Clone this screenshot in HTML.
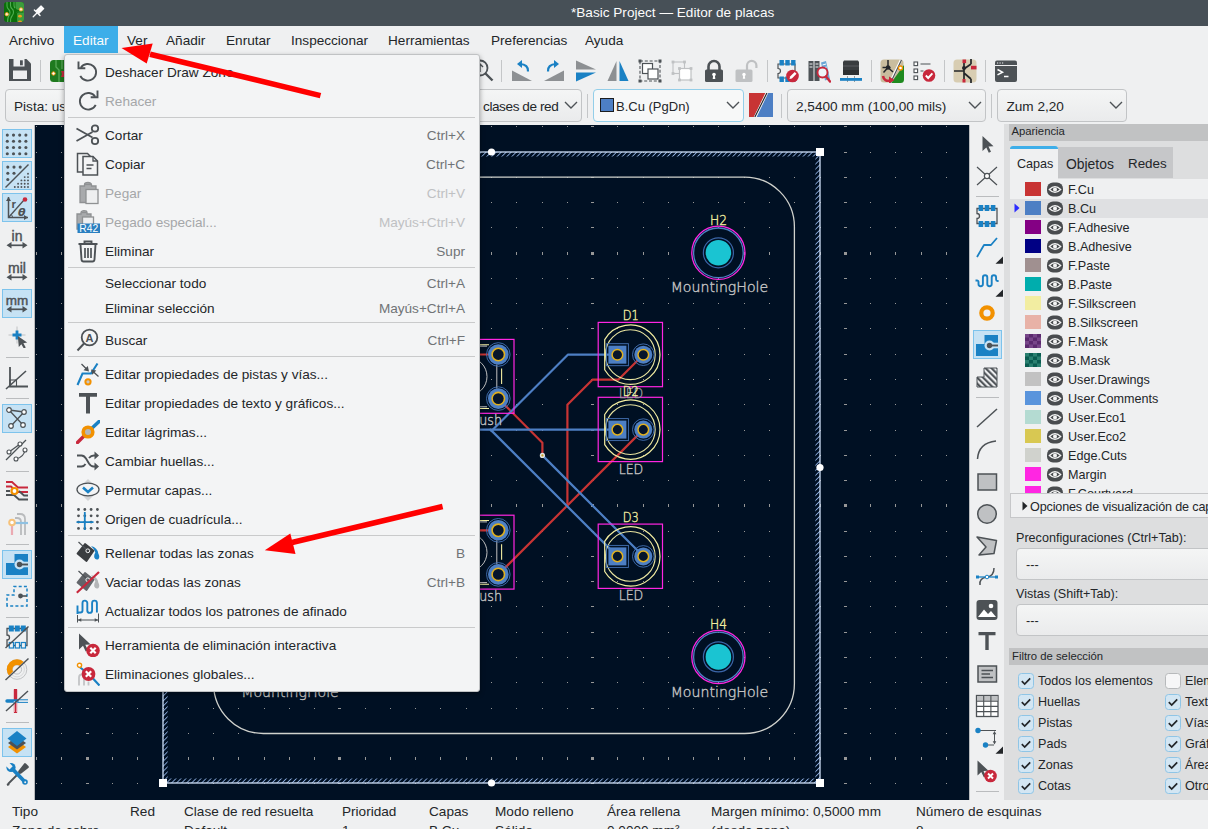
<!DOCTYPE html>
<html lang="es"><head><meta charset="utf-8"><title>Basic Project — Editor de placas</title>
<style>
html,body{margin:0;padding:0}
body{width:1208px;height:829px;overflow:hidden;position:relative;background:#eff0f1;font-family:"Liberation Sans",sans-serif;font-size:13.6px;color:#232629}
.abs{position:absolute}
.t{position:absolute;white-space:nowrap;line-height:16px;margin-top:1px}
#title{left:0;top:0;width:1208px;height:26px;background:#475057}
#title .t{color:#fcfcfc;top:4px;left:571px}
#menubar{left:0;top:26px;width:1208px;height:28px;background:#eff0f1}
#menubar .t{top:6px}
#menubar .hl{position:absolute;left:64px;top:0;width:54px;height:27px;background:#3daee9}
.sep{position:absolute;width:1px;background:#c4c6c8}
.combo{position:absolute;height:32.5px;border:1px solid #c2c4c6;border-radius:4px;background:linear-gradient(#f4f5f5,#eaebec);box-sizing:border-box}
.combo .t{top:8px}
.combo svg{position:absolute;right:3px;top:10px}
#menu{left:64px;top:54px;width:416px;height:638px;background:#f3f4f5;border:1px solid #c0c2c4;border-radius:3px;box-sizing:border-box;box-shadow:0 2px 5px rgba(0,0,0,.35)}
#menu .mi{position:absolute;left:40px;white-space:nowrap;line-height:16px;margin-top:1px}
#menu .sc{position:absolute;right:14px;white-space:nowrap;line-height:16px;color:#707376;margin-top:1px}
#menu .dis{color:#a5a7a9}
#menu .scd{color:#bfc1c3}
#menu .ms{position:absolute;left:3px;right:4px;height:1px;background:#c9cacb}
#menu svg{position:absolute}
</style></head><body>
<div id="title" class="abs"><span class="t">*Basic Project — Editor de placas</span>
<svg class="abs" style="left:4px;top:2px" width="20" height="20" viewBox="0 0 20 20"><rect width="20" height="20" rx="3" fill="#0a6f0a"/><path d="M11.500 0H17a3 3 0 0 1 3 3v14a3 3 0 0 1-3 3h-5v-8.500q0-2 2-2h1v-1.500q-3.500 0-3.500-3z" fill="#3c9c3c"/><path d="M3 0v4q0 2 1.500 3.200t1.500 3.200q0 2-1.200 3.500T3.600 20M6.500 0v3.500q0 2 1.500 3.200t1.500 3.300q0 2.500-1.500 4T6.500 20M10 0v3q0 2 1 3" fill="none" stroke="#4fae4f" stroke-width="1.100"/><path d="M12.500 20v-8q0-2 2-2h5" fill="none" stroke="#0a6f0a" stroke-width="1.200"/><circle cx="17" cy="7.400" r="1.700" fill="#ffe9c4" stroke="#f29c1c" stroke-width=".8"/><circle cx="2.800" cy="12.200" r="1.700" fill="#ffe9c4" stroke="#f29c1c" stroke-width=".8"/><ellipse cx="16" cy="14.200" rx="1.900" ry="1.400" fill="#f29c1c"/><ellipse cx="16" cy="19.600" rx="1.900" ry="1.200" fill="#f29c1c"/></svg>
<svg class="abs" style="left:32px;top:5px" width="14" height="14" viewBox="0 0 14 14"><path d="M1.200 11.800L5.200 7.800" stroke="#fcfcfc" stroke-width="1.300" stroke-linecap="round"/><path d="M2.400 5L8 10.600" stroke="#fcfcfc" stroke-width="1.400" stroke-linecap="round"/><g transform="translate(7.400 5.200) rotate(-45)"><rect x="-3.200" y="-2.500" width="8" height="5" rx=".6" fill="#fcfcfc"/></g></svg>
</div>
<div id="menubar" class="abs"><div class="hl"></div>
<span class="t" style="left:9px">Archivo</span>
<span class="t" style="left:73px;color:#fcfcfc">Editar</span>
<span class="t" style="left:127px">Ver</span>
<span class="t" style="left:166px">Añadir</span>
<span class="t" style="left:226px">Enrutar</span>
<span class="t" style="left:291px">Inspeccionar</span>
<span class="t" style="left:388px">Herramientas</span>
<span class="t" style="left:491px">Preferencias</span>
<span class="t" style="left:585px">Ayuda</span>
</div>
<!-- toolbar row 1 -->
<div id="tb1" class="abs" style="left:0;top:54px;width:1208px;height:34px">
<!--TBI--><svg class="abs" style="left:7.5px;top:3.800px" width="24" height="24" viewBox="0 0 24 24"><path d="M1 1h17.500L23 5.500V23H1z" fill="#4d5256"/><rect x="5.500" y="1" width="11" height="7.500" fill="#eff0f1"/><rect x="12" y="2.300" width="2.800" height="5" fill="#4d5256"/><rect x="5" y="12.500" width="14" height="8.500" fill="#eff0f1"/></svg>
<svg class="abs" style="left:49px;top:4.5px" width="24" height="24" viewBox="0 0 24 24"><rect x="1" y="1" width="22" height="22" rx="3.500" fill="#1f7a1f"/><path d="M7 1v7l3 3v12M13 1v9" stroke="#58a858" stroke-width="1.300" fill="none"/><circle cx="4.500" cy="14.500" r="1.700" fill="#fff" stroke="#f29100" stroke-width="1"/><path d="M9 12h5l-1 3 1 3H9l1-3z" fill="#c8283c" transform="translate(3 0)"/></svg>
<svg class="abs" style="left:470.5px;top:4.5px" width="24" height="24" viewBox="0 0 24 24"><circle cx="9" cy="9" r="7.500" fill="none" stroke="#4d5256" stroke-width="1.800"/><path d="M14.500 14.500l7 7" stroke="#4d5256" stroke-width="2.400"/><path d="M9 5v8M6 8l3-3 3 3" stroke="#4d5256" stroke-width="1.400" fill="none"/></svg>
<svg class="abs" style="left:509.70000000000005px;top:4.5px" width="24" height="24" viewBox="0 0 24 24"><path d="M2 22h20L2 11.500z" fill="#8d9093"/><path d="M18 12.500q.5-7-8-7.500" fill="none" stroke="#1a81c4" stroke-width="2.200"/><path d="M12 1v8L7 5z" fill="#1a81c4"/></svg>
<svg class="abs" style="left:542.3px;top:4.5px" width="24" height="24" viewBox="0 0 24 24"><path d="M22 22H2l20-10.500z" fill="#8d9093"/><path d="M6 12.500q-.5-7 8-7.500" fill="none" stroke="#1a81c4" stroke-width="2.200"/><path d="M12 1v8l5-4z" fill="#1a81c4"/></svg>
<svg class="abs" style="left:573.7px;top:4.5px" width="24" height="24" viewBox="0 0 24 24"><path d="M2 1.500v9h20z" fill="#8d9093"/><path d="M2 22.500v-9h20z" fill="#1a81c4"/></svg>
<svg class="abs" style="left:605.8px;top:4.5px" width="24" height="24" viewBox="0 0 24 24"><path d="M10.500 2v20h-9z" fill="#8d9093"/><path d="M13.500 2v20h9z" fill="#1a81c4"/></svg>
<svg class="abs" style="left:638.1px;top:4.5px" width="24" height="24" viewBox="0 0 24 24"><rect x="2" y="2" width="20" height="20" fill="none" stroke="#4d5256" stroke-width="1.100" stroke-dasharray="3 1.800"/><rect x="4.500" y="4.500" width="10" height="10" fill="#fff" stroke="#4d5256" stroke-width="1.200"/><rect x="10" y="10" width="10" height="10" fill="#fff" stroke="#4d5256" stroke-width="1.200"/><rect x="0.5" y="0.5" width="3" height="3" fill="#4d5256"/><rect x="0.5" y="20.5" width="3" height="3" fill="#4d5256"/><rect x="20.5" y="0.5" width="3" height="3" fill="#4d5256"/><rect x="20.5" y="20.5" width="3" height="3" fill="#4d5256"/></svg>
<svg class="abs" style="left:670.4px;top:4.5px" width="24" height="24" viewBox="0 0 24 24"><rect x="3" y="3" width="11.500" height="11.500" fill="none" stroke="#bfc1c3" stroke-width="1.100"/><rect x="9.500" y="9.500" width="11.500" height="11.500" fill="#fff" stroke="#bfc1c3" stroke-width="1.200"/><rect x="1.6" y="1.6" width="2.800" height="2.800" fill="#bfc1c3"/><rect x="13.1" y="1.6" width="2.800" height="2.800" fill="#bfc1c3"/><rect x="1.6" y="13.1" width="2.800" height="2.800" fill="#bfc1c3"/><rect x="8.1" y="8.1" width="2.800" height="2.800" fill="#bfc1c3"/><rect x="19.6" y="8.1" width="2.800" height="2.800" fill="#bfc1c3"/><rect x="8.1" y="19.6" width="2.800" height="2.800" fill="#bfc1c3"/><rect x="19.6" y="19.6" width="2.800" height="2.800" fill="#bfc1c3"/></svg>
<svg class="abs" style="left:701.9px;top:4.5px" width="24" height="24" viewBox="0 0 24 24"><path d="M6.500 11V7.500a5.500 5.500 0 0 1 11 0V11" fill="none" stroke="#4d5256" stroke-width="2.600"/><rect x="3" y="10.500" width="18" height="12.500" rx="1.500" fill="#4d5256"/><circle cx="12" cy="15.500" r="1.800" fill="#fff"/><path d="M11.200 16h1.600l.5 4h-2.600z" fill="#fff"/></svg>
<svg class="abs" style="left:733.7px;top:4.5px" width="24" height="24" viewBox="0 0 24 24"><path d="M13 11V6.500a4.700 4.700 0 0 1 9.400 0V9" fill="none" stroke="#bfc1c3" stroke-width="2.200"/><rect x="1.500" y="10.500" width="17" height="12.500" rx="1.500" fill="#bfc1c3"/><circle cx="10" cy="15.500" r="1.700" fill="#fff"/><path d="M9.300 16h1.400l.5 3.800H8.800z" fill="#fff"/></svg>
<svg class="abs" style="left:774.8px;top:4.5px" width="24" height="24" viewBox="0 0 24 24"><path d="M3 5h17v14H3v-4.500a2.500 2.500 0 0 0 0-5z" fill="none" stroke="#4d5256" stroke-width="1.200"/><rect x="4.5" y="1" width="4.400" height="5.500" fill="#1a81c4"/><rect x="4.5" y="17.5" width="4.400" height="5.500" fill="#1a81c4"/><rect x="10.3" y="1" width="4.400" height="5.500" fill="#1a81c4"/><rect x="10.3" y="17.5" width="4.400" height="5.500" fill="#1a81c4"/><rect x="16.1" y="1" width="4.400" height="5.500" fill="#1a81c4"/><rect x="16.1" y="17.5" width="4.400" height="5.500" fill="#1a81c4"/><circle cx="17.500" cy="17" r="6.300" fill="#c8283c"/><path d="M14.500 20l.6-2.400 4.600-4.600 1.800 1.800-4.600 4.600z" fill="#fff"/></svg>
<svg class="abs" style="left:807.1px;top:4.5px" width="24" height="24" viewBox="0 0 24 24"><rect x="1.500" y="2" width="5" height="20" fill="#4d5256"/><rect x="7.500" y="2" width="5" height="20" fill="#4d5256"/><path d="M2.500 5h3M2.500 8h3M8.500 5h3M8.500 8h3" stroke="#eff0f1" stroke-width="1"/><path d="M14 3.500l5-1.500 4 18-5 1.500z" fill="#6aa6d6"/><path d="M15.500 6l3.500-1M16.200 9l3.500-1" stroke="#fff" stroke-width="1"/><circle cx="15.500" cy="13.500" r="5" fill="#eef4fa" stroke="#c8283c" stroke-width="1.900"/><path d="M19 17.500l4 5" stroke="#c8283c" stroke-width="2.400" stroke-linecap="round"/></svg>
<svg class="abs" style="left:839.1px;top:4.5px" width="24" height="24" viewBox="0 0 24 24"><path d="M5 1.500h14l1 1.500v12.500H4V3z" fill="#3a3d40"/><path d="M4 7h16M4 15.500h16" stroke="#5a5d60" stroke-width="1"/><rect x="4" y="11" width="16" height="5" fill="#2c2f31"/><path d="M8.500 17v6M15.500 17v6" stroke="#9a9c9e" stroke-width="1"/><rect x="1" y="19" width="22" height="2.800" fill="#1a81c4"/></svg>
<svg class="abs" style="left:880.1px;top:4.5px" width="24" height="24" viewBox="0 0 24 24"><rect x="0.500" y="0.500" width="23" height="23" rx="3.500" fill="#c9bd9e"/><path d="M11 24L24 6V20.500a3.500 3.500 0 0 1-3.500 3.500z" fill="#1f8a1f"/><path d="M10 24L21 1" stroke="#fff" stroke-width="2.600"/><path d="M10.500 24L21.500 1" stroke="#4d5256" stroke-width="1.200"/><path d="M8 1v7M2.500 8.500h8M8 8.500l5 4.500M8 8.500l-4.500 5" stroke="#232629" stroke-width="1.500" fill="none"/><circle cx="8" cy="8.500" r="2.200" fill="#232629"/><circle cx="20.500" cy="9" r="2" fill="#fff" stroke="#f29100" stroke-width="1.300"/><path d="M3 17q1 6 8 4.500" fill="none" stroke="#c8283c" stroke-width="2.600"/><path d="M9 17.500l5.500 3.500-5.500 3.500z" fill="#c8283c"/></svg>
<svg class="abs" style="left:911.9px;top:4.5px" width="24" height="24" viewBox="0 0 24 24"><rect x="2" y="3" width="3.600" height="3.600" fill="#fff" stroke="#4d5256" stroke-width="1.100"/><rect x="2" y="10" width="3.600" height="3.600" fill="#fff" stroke="#4d5256" stroke-width="1.100"/><rect x="2" y="17" width="3.600" height="3.600" fill="#fff" stroke="#4d5256" stroke-width="1.100"/><path d="M8.500 5h10M8.500 12h3" stroke="#4d5256" stroke-width="1.200"/><circle cx="17" cy="16.500" r="6.300" fill="#c8283c"/><path d="M13.800 16.500l2.400 2.500 4.200-4.600" fill="none" stroke="#fff" stroke-width="1.900"/></svg>
<svg class="abs" style="left:952.9px;top:4.5px" width="24" height="24" viewBox="0 0 24 24"><rect x="0.500" y="0.500" width="23" height="23" rx="3.500" fill="#d8cdb2"/><path d="M11 3v18M1 12h10M11 10l7-5M11 14l7 6M18 5V0M18 20v4M18 8.500h4" stroke="#232629" stroke-width="1.700" fill="none"/><circle cx="11" cy="9" r="2" fill="#232629"/><rect x="9.500" y="0.500" width="3.600" height="3.600" fill="#c8283c"/><rect x="18" y="6.800" width="5.500" height="3.600" fill="#c8283c"/><rect x="9.500" y="20" width="3" height="3.500" fill="#c8283c"/></svg>
<svg class="abs" style="left:993.8px;top:4.5px" width="24" height="24" viewBox="0 0 24 24"><rect x="1" y="1.500" width="22" height="21.500" rx="2" fill="#4d5256"/><path d="M1 6.500h22" stroke="#eff0f1" stroke-width="1"/><path d="M3 4h1.200M5.500 4h1.200M8 4h1.200" stroke="#eff0f1" stroke-width="1.200"/><path d="M3.500 10.500l5 2.700-5 2.700" fill="none" stroke="#fff" stroke-width="1.500"/><path d="M10 17.500h4.500" stroke="#fff" stroke-width="1.500"/></svg>
<!--/TBI-->
<div class="sep" style="left:40px;top:6px;height:22px"></div>
<div class="sep" style="left:501px;top:6px;height:22px"></div>
<div class="sep" style="left:767px;top:6px;height:22px"></div>
<div class="sep" style="left:871px;top:6px;height:22px"></div>
<div class="sep" style="left:944px;top:6px;height:22px"></div>
<div class="sep" style="left:985px;top:6px;height:22px"></div>
</div>
<!-- toolbar row 2 -->
<div id="tb2" class="abs" style="left:0;top:88px;width:1208px;height:37px">
<div class="combo" style="left:5px;top:1px;width:200px"><span class="t" style="left:8px">Pista: usar tamaño de clases de red</span></div>
<div class="combo" style="left:380px;top:1px;width:202px"><span class="t" style="left:102px;letter-spacing:-0.42px">clases de red</span><svg width="14" height="10" viewBox="0 0 14 10"><path d="M1 2l6 6 6-6" fill="none" stroke="#4d5256" stroke-width="1.400"/></svg></div>
<div class="sep" style="left:587px;top:6px;height:24px"></div>
<div class="combo" style="left:593px;top:1px;width:151px;border-color:#93cee9;background:#f7f8f8"><div class="abs" style="left:6px;top:8px;width:12px;height:12px;background:#4d7fc4;border:1px solid #1b1e20"></div><span class="t" style="left:22px;font-size:13px">B.Cu (PgDn)</span><svg width="14" height="10" viewBox="0 0 14 10"><path d="M1 2l6 6 6-6" fill="none" stroke="#4d5256" stroke-width="1.400"/></svg></div>
<svg class="abs" style="left:749px;top:5px" width="24" height="24" viewBox="0 0 25 23" preserveAspectRatio="none"><rect width="25" height="23" fill="#c83434"/><path d="M18 0h7v23H5z" fill="#4d7fc4"/><path d="M17 0h3L8 23H5z" fill="#fff"/><path d="M18 0h1.300L6.800 23H5.500z" fill="#222"/></svg>
<div class="sep" style="left:781px;top:6px;height:24px"></div>
<div class="combo" style="left:787px;top:1px;width:199px"><span class="t" style="left:8px">2,5400 mm (100,00 mils)</span><svg width="14" height="10" viewBox="0 0 14 10"><path d="M1 2l6 6 6-6" fill="none" stroke="#4d5256" stroke-width="1.400"/></svg></div>
<div class="sep" style="left:991px;top:6px;height:24px"></div>
<div class="combo" style="left:997px;top:1px;width:130px"><span class="t" style="left:8.500px">Zum 2,20</span><svg width="14" height="10" viewBox="0 0 14 10"><path d="M1 2l6 6 6-6" fill="none" stroke="#4d5256" stroke-width="1.400"/></svg></div>
</div>
<svg class="abs" id="canvas" style="left:35px;top:125px" width="934" height="675" viewBox="35 125 934 675">
<rect x="35" y="125" width="934" height="675" fill="#001023"/>
<defs><pattern id="gd" x="717.4" y="251.8" width="25.25" height="25.25" patternUnits="userSpaceOnUse"><rect x="0.3" y="0.3" width="1.4" height="1.4" fill="#596170"/></pattern><pattern id="gd10" x="844.1" y="251.3" width="252.5" height="252.5" patternUnits="userSpaceOnUse"><rect x="0.3" y="0.3" width="2.4" height="2.4" fill="#8a8f98"/></pattern><pattern id="hz" width="3.55" height="3.55" patternUnits="userSpaceOnUse" patternTransform="rotate(-45)"><rect width="3.55" height="0.85" fill="#8fb0e2"/></pattern></defs>
<path shape-rendering="crispEdges" stroke="#979797" stroke-width="1" fill="none" d="M36 126.5h1M36 152.5h1M36 177.5h1M36 202.5h1M36 227.5h1M36.5 252v3M36 278.5h1M36 303.5h1M36 328.5h1M36 354.5h1M36 379.5h1M36 404.5h1M36 430.5h1M36 455.5h1M36 480.5h1M36.5 504v3M36 531.5h1M36 556.5h1M36 581.5h1M36 606.5h1M36 632.5h1M36 657.5h1M36 682.5h1M36 708.5h1M36 733.5h1M36.5 757v3M36 783.5h1M61 126.5h1M61 152.5h1M61 177.5h1M61 202.5h1M61 227.5h1M61.5 252v3M61 278.5h1M61 303.5h1M61 328.5h1M61 354.5h1M61 379.5h1M61 404.5h1M61 430.5h1M61 455.5h1M61 480.5h1M61.5 504v3M61 531.5h1M61 556.5h1M61 581.5h1M61 606.5h1M61 632.5h1M61 657.5h1M61 682.5h1M61 708.5h1M61 733.5h1M61.5 757v3M61 783.5h1M86 126.5h3M86 152.5h3M86 177.5h3M86 202.5h3M86 227.5h3M86 278.5h3M86 303.5h3M86 328.5h3M86 354.5h3M86 379.5h3M86 404.5h3M86 430.5h3M86 455.5h3M86 480.5h3M86 531.5h3M86 556.5h3M86 581.5h3M86 606.5h3M86 632.5h3M86 657.5h3M86 682.5h3M86 708.5h3M86 733.5h3M86 783.5h3M112 126.5h1M112 152.5h1M112 177.5h1M112 202.5h1M112 227.5h1M112.5 252v3M112 278.5h1M112 303.5h1M112 328.5h1M112 354.5h1M112 379.5h1M112 404.5h1M112 430.5h1M112 455.5h1M112 480.5h1M112.5 504v3M112 531.5h1M112 556.5h1M112 581.5h1M112 606.5h1M112 632.5h1M112 657.5h1M112 682.5h1M112 708.5h1M112 733.5h1M112.5 757v3M112 783.5h1M137 126.5h1M137 152.5h1M137 177.5h1M137 202.5h1M137 227.5h1M137.5 252v3M137 278.5h1M137 303.5h1M137 328.5h1M137 354.5h1M137 379.5h1M137 404.5h1M137 430.5h1M137 455.5h1M137 480.5h1M137.5 504v3M137 531.5h1M137 556.5h1M137 581.5h1M137 606.5h1M137 632.5h1M137 657.5h1M137 682.5h1M137 708.5h1M137 733.5h1M137.5 757v3M137 783.5h1M163 126.5h1M163 152.5h1M163 177.5h1M163 202.5h1M163 227.5h1M163.5 252v3M163 278.5h1M163 303.5h1M163 328.5h1M163 354.5h1M163 379.5h1M163 404.5h1M163 430.5h1M163 455.5h1M163 480.5h1M163.5 504v3M163 531.5h1M163 556.5h1M163 581.5h1M163 606.5h1M163 632.5h1M163 657.5h1M163 682.5h1M163 708.5h1M163 733.5h1M163.5 757v3M163 783.5h1M188 126.5h1M188 152.5h1M188 177.5h1M188 202.5h1M188 227.5h1M188.5 252v3M188 278.5h1M188 303.5h1M188 328.5h1M188 354.5h1M188 379.5h1M188 404.5h1M188 430.5h1M188 455.5h1M188 480.5h1M188.5 504v3M188 531.5h1M188 556.5h1M188 581.5h1M188 606.5h1M188 632.5h1M188 657.5h1M188 682.5h1M188 708.5h1M188 733.5h1M188.5 757v3M188 783.5h1M213 126.5h1M213 152.5h1M213 177.5h1M213 202.5h1M213 227.5h1M213.5 252v3M213 278.5h1M213 303.5h1M213 328.5h1M213 354.5h1M213 379.5h1M213 404.5h1M213 430.5h1M213 455.5h1M213 480.5h1M213.5 504v3M213 531.5h1M213 556.5h1M213 581.5h1M213 606.5h1M213 632.5h1M213 657.5h1M213 682.5h1M213 708.5h1M213 733.5h1M213.5 757v3M213 783.5h1M238 126.5h1M238 152.5h1M238 177.5h1M238 202.5h1M238 227.5h1M238.5 252v3M238 278.5h1M238 303.5h1M238 328.5h1M238 354.5h1M238 379.5h1M238 404.5h1M238 430.5h1M238 455.5h1M238 480.5h1M238.5 504v3M238 531.5h1M238 556.5h1M238 581.5h1M238 606.5h1M238 632.5h1M238 657.5h1M238 682.5h1M238 708.5h1M238 733.5h1M238.5 757v3M238 783.5h1M264 126.5h1M264 152.5h1M264 177.5h1M264 202.5h1M264 227.5h1M264.5 252v3M264 278.5h1M264 303.5h1M264 328.5h1M264 354.5h1M264 379.5h1M264 404.5h1M264 430.5h1M264 455.5h1M264 480.5h1M264.5 504v3M264 531.5h1M264 556.5h1M264 581.5h1M264 606.5h1M264 632.5h1M264 657.5h1M264 682.5h1M264 708.5h1M264 733.5h1M264.5 757v3M264 783.5h1M289 126.5h1M289 152.5h1M289 177.5h1M289 202.5h1M289 227.5h1M289.5 252v3M289 278.5h1M289 303.5h1M289 328.5h1M289 354.5h1M289 379.5h1M289 404.5h1M289 430.5h1M289 455.5h1M289 480.5h1M289.5 504v3M289 531.5h1M289 556.5h1M289 581.5h1M289 606.5h1M289 632.5h1M289 657.5h1M289 682.5h1M289 708.5h1M289 733.5h1M289.5 757v3M289 783.5h1M314 126.5h1M314 152.5h1M314 177.5h1M314 202.5h1M314 227.5h1M314.5 252v3M314 278.5h1M314 303.5h1M314 328.5h1M314 354.5h1M314 379.5h1M314 404.5h1M314 430.5h1M314 455.5h1M314 480.5h1M314.5 504v3M314 531.5h1M314 556.5h1M314 581.5h1M314 606.5h1M314 632.5h1M314 657.5h1M314 682.5h1M314 708.5h1M314 733.5h1M314.5 757v3M314 783.5h1M338 126.5h3M338 152.5h3M338 177.5h3M338 202.5h3M338 227.5h3M338 278.5h3M338 303.5h3M338 328.5h3M338 354.5h3M338 379.5h3M338 404.5h3M338 430.5h3M338 455.5h3M338 480.5h3M338 531.5h3M338 556.5h3M338 581.5h3M338 606.5h3M338 632.5h3M338 657.5h3M338 682.5h3M338 708.5h3M338 733.5h3M338 783.5h3M365 126.5h1M365 152.5h1M365 177.5h1M365 202.5h1M365 227.5h1M365.5 252v3M365 278.5h1M365 303.5h1M365 328.5h1M365 354.5h1M365 379.5h1M365 404.5h1M365 430.5h1M365 455.5h1M365 480.5h1M365.5 504v3M365 531.5h1M365 556.5h1M365 581.5h1M365 606.5h1M365 632.5h1M365 657.5h1M365 682.5h1M365 708.5h1M365 733.5h1M365.5 757v3M365 783.5h1M390 126.5h1M390 152.5h1M390 177.5h1M390 202.5h1M390 227.5h1M390.5 252v3M390 278.5h1M390 303.5h1M390 328.5h1M390 354.5h1M390 379.5h1M390 404.5h1M390 430.5h1M390 455.5h1M390 480.5h1M390.5 504v3M390 531.5h1M390 556.5h1M390 581.5h1M390 606.5h1M390 632.5h1M390 657.5h1M390 682.5h1M390 708.5h1M390 733.5h1M390.5 757v3M390 783.5h1M415 126.5h1M415 152.5h1M415 177.5h1M415 202.5h1M415 227.5h1M415.5 252v3M415 278.5h1M415 303.5h1M415 328.5h1M415 354.5h1M415 379.5h1M415 404.5h1M415 430.5h1M415 455.5h1M415 480.5h1M415.5 504v3M415 531.5h1M415 556.5h1M415 581.5h1M415 606.5h1M415 632.5h1M415 657.5h1M415 682.5h1M415 708.5h1M415 733.5h1M415.5 757v3M415 783.5h1M440 126.5h1M440 152.5h1M440 177.5h1M440 202.5h1M440 227.5h1M440.5 252v3M440 278.5h1M440 303.5h1M440 328.5h1M440 354.5h1M440 379.5h1M440 404.5h1M440 430.5h1M440 455.5h1M440 480.5h1M440.5 504v3M440 531.5h1M440 556.5h1M440 581.5h1M440 606.5h1M440 632.5h1M440 657.5h1M440 682.5h1M440 708.5h1M440 733.5h1M440.5 757v3M440 783.5h1M466 126.5h1M466 152.5h1M466 177.5h1M466 202.5h1M466 227.5h1M466.5 252v3M466 278.5h1M466 303.5h1M466 328.5h1M466 354.5h1M466 379.5h1M466 404.5h1M466 430.5h1M466 455.5h1M466 480.5h1M466.5 504v3M466 531.5h1M466 556.5h1M466 581.5h1M466 606.5h1M466 632.5h1M466 657.5h1M466 682.5h1M466 708.5h1M466 733.5h1M466.5 757v3M466 783.5h1M491 126.5h1M491 152.5h1M491 177.5h1M491 202.5h1M491 227.5h1M491.5 252v3M491 278.5h1M491 303.5h1M491 328.5h1M491 354.5h1M491 379.5h1M491 404.5h1M491 430.5h1M491 455.5h1M491 480.5h1M491.5 504v3M491 531.5h1M491 556.5h1M491 581.5h1M491 606.5h1M491 632.5h1M491 657.5h1M491 682.5h1M491 708.5h1M491 733.5h1M491.5 757v3M491 783.5h1M516 126.5h1M516 152.5h1M516 177.5h1M516 202.5h1M516 227.5h1M516.5 252v3M516 278.5h1M516 303.5h1M516 328.5h1M516 354.5h1M516 379.5h1M516 404.5h1M516 430.5h1M516 455.5h1M516 480.5h1M516.5 504v3M516 531.5h1M516 556.5h1M516 581.5h1M516 606.5h1M516 632.5h1M516 657.5h1M516 682.5h1M516 708.5h1M516 733.5h1M516.5 757v3M516 783.5h1M542 126.5h1M542 152.5h1M542 177.5h1M542 202.5h1M542 227.5h1M542.5 252v3M542 278.5h1M542 303.5h1M542 328.5h1M542 354.5h1M542 379.5h1M542 404.5h1M542 430.5h1M542 455.5h1M542 480.5h1M542.5 504v3M542 531.5h1M542 556.5h1M542 581.5h1M542 606.5h1M542 632.5h1M542 657.5h1M542 682.5h1M542 708.5h1M542 733.5h1M542.5 757v3M542 783.5h1M567 126.5h1M567 152.5h1M567 177.5h1M567 202.5h1M567 227.5h1M567.5 252v3M567 278.5h1M567 303.5h1M567 328.5h1M567 354.5h1M567 379.5h1M567 404.5h1M567 430.5h1M567 455.5h1M567 480.5h1M567.5 504v3M567 531.5h1M567 556.5h1M567 581.5h1M567 606.5h1M567 632.5h1M567 657.5h1M567 682.5h1M567 708.5h1M567 733.5h1M567.5 757v3M567 783.5h1M591 126.5h3M591 152.5h3M591 177.5h3M591 202.5h3M591 227.5h3M591 278.5h3M591 303.5h3M591 328.5h3M591 354.5h3M591 379.5h3M591 404.5h3M591 430.5h3M591 455.5h3M591 480.5h3M591 531.5h3M591 556.5h3M591 581.5h3M591 606.5h3M591 632.5h3M591 657.5h3M591 682.5h3M591 708.5h3M591 733.5h3M591 783.5h3M617 126.5h1M617 152.5h1M617 177.5h1M617 202.5h1M617 227.5h1M617.5 252v3M617 278.5h1M617 303.5h1M617 328.5h1M617 354.5h1M617 379.5h1M617 404.5h1M617 430.5h1M617 455.5h1M617 480.5h1M617.5 504v3M617 531.5h1M617 556.5h1M617 581.5h1M617 606.5h1M617 632.5h1M617 657.5h1M617 682.5h1M617 708.5h1M617 733.5h1M617.5 757v3M617 783.5h1M643 126.5h1M643 152.5h1M643 177.5h1M643 202.5h1M643 227.5h1M643.5 252v3M643 278.5h1M643 303.5h1M643 328.5h1M643 354.5h1M643 379.5h1M643 404.5h1M643 430.5h1M643 455.5h1M643 480.5h1M643.5 504v3M643 531.5h1M643 556.5h1M643 581.5h1M643 606.5h1M643 632.5h1M643 657.5h1M643 682.5h1M643 708.5h1M643 733.5h1M643.5 757v3M643 783.5h1M668 126.5h1M668 152.5h1M668 177.5h1M668 202.5h1M668 227.5h1M668.5 252v3M668 278.5h1M668 303.5h1M668 328.5h1M668 354.5h1M668 379.5h1M668 404.5h1M668 430.5h1M668 455.5h1M668 480.5h1M668.5 504v3M668 531.5h1M668 556.5h1M668 581.5h1M668 606.5h1M668 632.5h1M668 657.5h1M668 682.5h1M668 708.5h1M668 733.5h1M668.5 757v3M668 783.5h1M693 126.5h1M693 152.5h1M693 177.5h1M693 202.5h1M693 227.5h1M693.5 252v3M693 278.5h1M693 303.5h1M693 328.5h1M693 354.5h1M693 379.5h1M693 404.5h1M693 430.5h1M693 455.5h1M693 480.5h1M693.5 504v3M693 531.5h1M693 556.5h1M693 581.5h1M693 606.5h1M693 632.5h1M693 657.5h1M693 682.5h1M693 708.5h1M693 733.5h1M693.5 757v3M693 783.5h1M718 126.5h1M718 152.5h1M718 177.5h1M718 202.5h1M718 227.5h1M718.5 252v3M718 278.5h1M718 303.5h1M718 328.5h1M718 354.5h1M718 379.5h1M718 404.5h1M718 430.5h1M718 455.5h1M718 480.5h1M718.5 504v3M718 531.5h1M718 556.5h1M718 581.5h1M718 606.5h1M718 632.5h1M718 657.5h1M718 682.5h1M718 708.5h1M718 733.5h1M718.5 757v3M718 783.5h1M744 126.5h1M744 152.5h1M744 177.5h1M744 202.5h1M744 227.5h1M744.5 252v3M744 278.5h1M744 303.5h1M744 328.5h1M744 354.5h1M744 379.5h1M744 404.5h1M744 430.5h1M744 455.5h1M744 480.5h1M744.5 504v3M744 531.5h1M744 556.5h1M744 581.5h1M744 606.5h1M744 632.5h1M744 657.5h1M744 682.5h1M744 708.5h1M744 733.5h1M744.5 757v3M744 783.5h1M769 126.5h1M769 152.5h1M769 177.5h1M769 202.5h1M769 227.5h1M769.5 252v3M769 278.5h1M769 303.5h1M769 328.5h1M769 354.5h1M769 379.5h1M769 404.5h1M769 430.5h1M769 455.5h1M769 480.5h1M769.5 504v3M769 531.5h1M769 556.5h1M769 581.5h1M769 606.5h1M769 632.5h1M769 657.5h1M769 682.5h1M769 708.5h1M769 733.5h1M769.5 757v3M769 783.5h1M794 126.5h1M794 152.5h1M794 177.5h1M794 202.5h1M794 227.5h1M794.5 252v3M794 278.5h1M794 303.5h1M794 328.5h1M794 354.5h1M794 379.5h1M794 404.5h1M794 430.5h1M794 455.5h1M794 480.5h1M794.5 504v3M794 531.5h1M794 556.5h1M794 581.5h1M794 606.5h1M794 632.5h1M794 657.5h1M794 682.5h1M794 708.5h1M794 733.5h1M794.5 757v3M794 783.5h1M820 126.5h1M820 152.5h1M820 177.5h1M820 202.5h1M820 227.5h1M820.5 252v3M820 278.5h1M820 303.5h1M820 328.5h1M820 354.5h1M820 379.5h1M820 404.5h1M820 430.5h1M820 455.5h1M820 480.5h1M820.5 504v3M820 531.5h1M820 556.5h1M820 581.5h1M820 606.5h1M820 632.5h1M820 657.5h1M820 682.5h1M820 708.5h1M820 733.5h1M820.5 757v3M820 783.5h1M844 126.5h3M844 152.5h3M844 177.5h3M844 202.5h3M844 227.5h3M844 278.5h3M844 303.5h3M844 328.5h3M844 354.5h3M844 379.5h3M844 404.5h3M844 430.5h3M844 455.5h3M844 480.5h3M844 531.5h3M844 556.5h3M844 581.5h3M844 606.5h3M844 632.5h3M844 657.5h3M844 682.5h3M844 708.5h3M844 733.5h3M844 783.5h3M870 126.5h1M870 152.5h1M870 177.5h1M870 202.5h1M870 227.5h1M870.5 252v3M870 278.5h1M870 303.5h1M870 328.5h1M870 354.5h1M870 379.5h1M870 404.5h1M870 430.5h1M870 455.5h1M870 480.5h1M870.5 504v3M870 531.5h1M870 556.5h1M870 581.5h1M870 606.5h1M870 632.5h1M870 657.5h1M870 682.5h1M870 708.5h1M870 733.5h1M870.5 757v3M870 783.5h1M895 126.5h1M895 152.5h1M895 177.5h1M895 202.5h1M895 227.5h1M895.5 252v3M895 278.5h1M895 303.5h1M895 328.5h1M895 354.5h1M895 379.5h1M895 404.5h1M895 430.5h1M895 455.5h1M895 480.5h1M895.5 504v3M895 531.5h1M895 556.5h1M895 581.5h1M895 606.5h1M895 632.5h1M895 657.5h1M895 682.5h1M895 708.5h1M895 733.5h1M895.5 757v3M895 783.5h1M921 126.5h1M921 152.5h1M921 177.5h1M921 202.5h1M921 227.5h1M921.5 252v3M921 278.5h1M921 303.5h1M921 328.5h1M921 354.5h1M921 379.5h1M921 404.5h1M921 430.5h1M921 455.5h1M921 480.5h1M921.5 504v3M921 531.5h1M921 556.5h1M921 581.5h1M921 606.5h1M921 632.5h1M921 657.5h1M921 682.5h1M921 708.5h1M921 733.5h1M921.5 757v3M921 783.5h1M946 126.5h1M946 152.5h1M946 177.5h1M946 202.5h1M946 227.5h1M946.5 252v3M946 278.5h1M946 303.5h1M946 328.5h1M946 354.5h1M946 379.5h1M946 404.5h1M946 430.5h1M946 455.5h1M946 480.5h1M946.5 504v3M946 531.5h1M946 556.5h1M946 581.5h1M946 606.5h1M946 632.5h1M946 657.5h1M946 682.5h1M946 708.5h1M946 733.5h1M946.5 757v3M946 783.5h1M86 253.5h3M86 252.5h3M86 254.5h3M86 505.5h3M86 504.5h3M86 506.5h3M86 758.5h3M86 757.5h3M86 759.5h3M338 253.5h3M338 252.5h3M338 254.5h3M338 505.5h3M338 504.5h3M338 506.5h3M338 758.5h3M338 757.5h3M338 759.5h3M591 253.5h3M591 252.5h3M591 254.5h3M591 505.5h3M591 504.5h3M591 506.5h3M591 758.5h3M591 757.5h3M591 759.5h3M844 253.5h3M844 252.5h3M844 254.5h3M844 505.5h3M844 504.5h3M844 506.5h3M844 758.5h3M844 757.5h3M844 759.5h3"/>
<path d="M163 152H820V783H163Z M167.6 156.6V778.4H815.4V156.6Z" fill="url(#hz)" fill-rule="evenodd"/>
<rect x="163" y="152" width="657" height="631" fill="none" stroke="#cfe0f7" stroke-width="1.3"/>
<rect x="213.6" y="177.1" width="580.8" height="556.4" rx="49.7" fill="none" stroke="#d0d2cd" stroke-width="1.3"/>
<style>.kt{font-family:"DejaVu Sans","DejaVu Sans Light",sans-serif;font-weight:200;stroke-width:0.4px;paint-order:stroke}</style>
<circle cx="718.4" cy="252.8" r="26.6" fill="none" stroke="#ff26e2" stroke-width="1.3"/><circle cx="718.4" cy="252.8" r="24.8" fill="none" stroke="#4d7fc4" stroke-width="1.3"/><circle cx="718.4" cy="252.8" r="15" fill="none" stroke="#3b66a8" stroke-width="1.2"/><circle cx="718.4" cy="252.8" r="12.8" fill="#1ac4d2"/><text x="710.1" y="224.5" class="kt" fill="#f2eda1" stroke="#f2eda1" font-size="14.5" textLength="17" lengthAdjust="spacingAndGlyphs">H2</text><text x="670.6999999999999" y="292.40000000000003" class="kt" fill="#c2c2c2" stroke="#c2c2c2" font-size="14.5" textLength="97.5" lengthAdjust="spacingAndGlyphs">MountingHole</text>
<circle cx="718.4" cy="656.9" r="26.6" fill="none" stroke="#ff26e2" stroke-width="1.3"/><circle cx="718.4" cy="656.9" r="24.8" fill="none" stroke="#4d7fc4" stroke-width="1.3"/><circle cx="718.4" cy="656.9" r="15" fill="none" stroke="#3b66a8" stroke-width="1.2"/><circle cx="718.4" cy="656.9" r="12.8" fill="#1ac4d2"/><text x="710.1" y="628.6" class="kt" fill="#f2eda1" stroke="#f2eda1" font-size="14.5" textLength="17" lengthAdjust="spacingAndGlyphs">H4</text><text x="670.6999999999999" y="696.5" class="kt" fill="#c2c2c2" stroke="#c2c2c2" font-size="14.5" textLength="97.5" lengthAdjust="spacingAndGlyphs">MountingHole</text>
<circle cx="289" cy="252.8" r="26.6" fill="none" stroke="#ff26e2" stroke-width="1.3"/><circle cx="289" cy="252.8" r="24.8" fill="none" stroke="#4d7fc4" stroke-width="1.3"/><circle cx="289" cy="252.8" r="15" fill="none" stroke="#3b66a8" stroke-width="1.2"/><circle cx="289" cy="252.8" r="12.8" fill="#1ac4d2"/><text x="280.7" y="224.5" class="kt" fill="#f2eda1" stroke="#f2eda1" font-size="14.5" textLength="17" lengthAdjust="spacingAndGlyphs">H1</text><text x="241.3" y="292.40000000000003" class="kt" fill="#c2c2c2" stroke="#c2c2c2" font-size="14.5" textLength="97.5" lengthAdjust="spacingAndGlyphs">MountingHole</text>
<circle cx="289" cy="656.9" r="26.6" fill="none" stroke="#ff26e2" stroke-width="1.3"/><circle cx="289" cy="656.9" r="24.8" fill="none" stroke="#4d7fc4" stroke-width="1.3"/><circle cx="289" cy="656.9" r="15" fill="none" stroke="#3b66a8" stroke-width="1.2"/><circle cx="289" cy="656.9" r="12.8" fill="#1ac4d2"/><text x="280.7" y="628.6" class="kt" fill="#f2eda1" stroke="#f2eda1" font-size="14.5" textLength="17" lengthAdjust="spacingAndGlyphs">H3</text><text x="241.3" y="696.5" class="kt" fill="#c2c2c2" stroke="#c2c2c2" font-size="14.5" textLength="97.5" lengthAdjust="spacingAndGlyphs">MountingHole</text>
<polyline points="498.3,398.6 542.4,442.7 542.4,455.4" fill="none" stroke="#c83434" stroke-width="2.2" stroke-linejoin="round" stroke-linecap="round"/>
<polyline points="643.3,354.7 618.3,379.7 592.4,379.7 567.4,404.7 567.4,505" fill="none" stroke="#c83434" stroke-width="2.2" stroke-linejoin="round" stroke-linecap="round"/>
<polyline points="643.3,429.6 498.3,574.6" fill="none" stroke="#c83434" stroke-width="2.2" stroke-linejoin="round" stroke-linecap="round"/>
<polyline points="470,354.5 488,354.5" fill="none" stroke="#c83434" stroke-width="2.2" stroke-linejoin="round" stroke-linecap="round"/>
<polyline points="470,530.3 488,530.3" fill="none" stroke="#c83434" stroke-width="2.2" stroke-linejoin="round" stroke-linecap="round"/>
<polyline points="617.4,354.7 567.8,354.7 491.5,431" fill="none" stroke="#4d7fc4" stroke-width="2.2" stroke-linejoin="round" stroke-linecap="round"/>
<polyline points="617.4,429.6 440,429.6" fill="none" stroke="#4d7fc4" stroke-width="2.2" stroke-linejoin="round" stroke-linecap="round"/>
<polyline points="490.5,429.6 617.4,556.4" fill="none" stroke="#4d7fc4" stroke-width="2.2" stroke-linejoin="round" stroke-linecap="round"/>
<polyline points="542.4,455.4 643.3,556.3" fill="none" stroke="#4d7fc4" stroke-width="2.2" stroke-linejoin="round" stroke-linecap="round"/>
<circle cx="542.4" cy="455.4" r="2.6" fill="#e0e0e0"/><circle cx="542.4" cy="455.4" r="1.1" fill="#c8a020"/>
<rect x="598.1999999999999" y="322.4" width="64.3" height="64.3" fill="none" stroke="#ff26e2" stroke-width="1.2"/>
<path d="M604.6999999999999 339.6424437573689A29.7 29.7 0 1 1 604.6999999999999 369.7575562426311Z" fill="none" stroke="#f2eda1" stroke-width="1.2"/>
<circle cx="630.3" cy="354.7" r="24.9" fill="none" stroke="#e8e4a0" stroke-width="1.1"/>
<rect x="608.4" y="345.7" width="18" height="18" fill="#4d7fc4"/><rect x="606.4" y="343.7" width="22" height="22" fill="none" stroke="#4472b4" stroke-width="0.9"/>
<circle cx="643.3" cy="354.7" r="9" fill="#4d7fc4"/><circle cx="643.3" cy="354.7" r="10.8" fill="none" stroke="#4472b4" stroke-width="0.9"/>
<circle cx="617.4" cy="354.7" r="5.3" fill="#06152b" stroke="#e0b020" stroke-width="1.5"/>
<circle cx="643.3" cy="354.7" r="5.3" fill="#06152b" stroke="#e0b020" stroke-width="1.5"/>
<rect x="598.1999999999999" y="397.3" width="64.3" height="64.3" fill="none" stroke="#ff26e2" stroke-width="1.2"/>
<path d="M604.6999999999999 414.5424437573689A29.7 29.7 0 1 1 604.6999999999999 444.65755624263113Z" fill="none" stroke="#f2eda1" stroke-width="1.2"/>
<circle cx="630.3" cy="429.6" r="24.9" fill="none" stroke="#e8e4a0" stroke-width="1.1"/>
<rect x="608.4" y="420.6" width="18" height="18" fill="#4d7fc4"/><rect x="606.4" y="418.6" width="22" height="22" fill="none" stroke="#4472b4" stroke-width="0.9"/>
<circle cx="643.3" cy="429.6" r="9" fill="#4d7fc4"/><circle cx="643.3" cy="429.6" r="10.8" fill="none" stroke="#4472b4" stroke-width="0.9"/>
<circle cx="617.4" cy="429.6" r="5.3" fill="#06152b" stroke="#e0b020" stroke-width="1.5"/>
<circle cx="643.3" cy="429.6" r="5.3" fill="#06152b" stroke="#e0b020" stroke-width="1.5"/>
<rect x="598.1999999999999" y="524.1" width="64.3" height="64.3" fill="none" stroke="#ff26e2" stroke-width="1.2"/>
<path d="M604.6999999999999 541.3424437573689A29.7 29.7 0 1 1 604.6999999999999 571.4575562426311Z" fill="none" stroke="#f2eda1" stroke-width="1.2"/>
<circle cx="630.3" cy="556.4" r="24.9" fill="none" stroke="#e8e4a0" stroke-width="1.1"/>
<rect x="608.4" y="547.4" width="18" height="18" fill="#4d7fc4"/><rect x="606.4" y="545.4" width="22" height="22" fill="none" stroke="#4472b4" stroke-width="0.9"/>
<circle cx="643.3" cy="556.4" r="9" fill="#4d7fc4"/><circle cx="643.3" cy="556.4" r="10.8" fill="none" stroke="#4472b4" stroke-width="0.9"/>
<circle cx="617.4" cy="556.4" r="5.3" fill="#06152b" stroke="#e0b020" stroke-width="1.5"/>
<circle cx="643.3" cy="556.4" r="5.3" fill="#06152b" stroke="#e0b020" stroke-width="1.5"/>
<text x="618.7" y="398.3" class="kt" fill="#9c9c9c" stroke="#9c9c9c" font-size="13.5" textLength="24.6" lengthAdjust="spacingAndGlyphs">LED</text>
<text x="622.7" y="319.9" class="kt" fill="#f2eda1" stroke="#f2eda1" font-size="13.5" textLength="16" lengthAdjust="spacingAndGlyphs">D1</text>
<text x="622.7" y="396.0" class="kt" fill="#f2eda1" stroke="#f2eda1" font-size="13.5" textLength="16" lengthAdjust="spacingAndGlyphs">D2</text>
<text x="622.7" y="522.0" class="kt" fill="#f2eda1" stroke="#f2eda1" font-size="13.5" textLength="16" lengthAdjust="spacingAndGlyphs">D3</text>
<text x="618.7" y="473.6" class="kt" fill="#c2c2c2" stroke="#c2c2c2" font-size="13.5" textLength="24.6" lengthAdjust="spacingAndGlyphs">LED</text>
<text x="618.7" y="600.4" class="kt" fill="#c2c2c2" stroke="#c2c2c2" font-size="13.5" textLength="24.6" lengthAdjust="spacingAndGlyphs">LED</text>
<rect x="440" y="339.4" width="74" height="73.90000000000002" fill="none" stroke="#ff26e2" stroke-width="1.2"/>
<path d="M440 344.7H489M440 408.5H489M501.6 368.55V384.05" fill="none" stroke="#f2eda1" stroke-width="1.1"/>
<path d="M440 346.1H487M440 406.8H487M496.8 364.5V388.6" fill="none" stroke="#c2c2c2" stroke-width="1"/>
<circle cx="468" cy="376.55" r="19" fill="none" stroke="#c2c2c2" stroke-width="1"/>
<circle cx="498.3" cy="354.5" r="10.3" fill="#4d7fc4"/><circle cx="498.3" cy="354.5" r="11.8" fill="none" stroke="#4472b4" stroke-width="0.9"/><circle cx="498.3" cy="354.5" r="6.2" fill="#06152b" stroke="#e0b020" stroke-width="1.6"/>
<circle cx="498.3" cy="398.6" r="10.3" fill="#4d7fc4"/><circle cx="498.3" cy="398.6" r="11.8" fill="none" stroke="#4472b4" stroke-width="0.9"/><circle cx="498.3" cy="398.6" r="6.2" fill="#06152b" stroke="#e0b020" stroke-width="1.6"/>
<text x="445" y="425.40000000000003" class="kt" fill="#c2c2c2" stroke="#c2c2c2" font-size="13.5" textLength="57" lengthAdjust="spacingAndGlyphs">SW_Push</text>
<rect x="440" y="515.1999999999999" width="74" height="73.90000000000002" fill="none" stroke="#ff26e2" stroke-width="1.2"/>
<path d="M440 520.5H489M440 584.3H489M501.6 544.3499999999999V559.8499999999999" fill="none" stroke="#f2eda1" stroke-width="1.1"/>
<path d="M440 521.9H487M440 582.6H487M496.8 540.3V564.4" fill="none" stroke="#c2c2c2" stroke-width="1"/>
<circle cx="468" cy="552.3499999999999" r="19" fill="none" stroke="#c2c2c2" stroke-width="1"/>
<circle cx="498.3" cy="530.3" r="10.3" fill="#4d7fc4"/><circle cx="498.3" cy="530.3" r="11.8" fill="none" stroke="#4472b4" stroke-width="0.9"/><circle cx="498.3" cy="530.3" r="6.2" fill="#06152b" stroke="#e0b020" stroke-width="1.6"/>
<circle cx="498.3" cy="574.4" r="10.3" fill="#4d7fc4"/><circle cx="498.3" cy="574.4" r="11.8" fill="none" stroke="#4472b4" stroke-width="0.9"/><circle cx="498.3" cy="574.4" r="6.2" fill="#06152b" stroke="#e0b020" stroke-width="1.6"/>
<text x="445" y="601.1999999999999" class="kt" fill="#c2c2c2" stroke="#c2c2c2" font-size="13.5" textLength="57" lengthAdjust="spacingAndGlyphs">SW_Push</text>
<rect x="159" y="148" width="8" height="8" fill="#fff"/>
<rect x="816" y="148" width="8" height="8" fill="#fff"/>
<rect x="816" y="779" width="8" height="8" fill="#fff"/>
<rect x="159" y="779" width="8" height="8" fill="#fff"/>
<circle cx="491.5" cy="152" r="3.6" fill="#fff"/>
<circle cx="820" cy="467.5" r="3.6" fill="#fff"/>
<circle cx="491.5" cy="783" r="3.6" fill="#fff"/>
<circle cx="163" cy="467.5" r="3.6" fill="#fff"/>
</svg>
<div id="left" class="abs" style="left:0;top:125px;width:35px;height:676px;background:#eff0f1">
<div class="abs" style="left:34px;top:0;width:1px;height:676px;background:#b9bbbd"></div>
<div class="abs" style="left:2px;top:4.2px;width:30px;height:29px;background:#c6e2f4;border:1px solid #7dc3ec;box-sizing:border-box"></div><svg class="abs" style="left:5px;top:6.7px" width="24" height="24" viewBox="0 0 24 24"><circle cx="2.3" cy="3.1" r="1.55" fill="#4d5256"/><circle cx="2.3" cy="9.3" r="1.55" fill="#4d5256"/><circle cx="2.3" cy="15.5" r="1.55" fill="#4d5256"/><circle cx="2.3" cy="21.7" r="1.55" fill="#4d5256"/><circle cx="8.5" cy="3.1" r="1.55" fill="#4d5256"/><circle cx="8.5" cy="9.3" r="1.55" fill="#4d5256"/><circle cx="8.5" cy="15.5" r="1.55" fill="#4d5256"/><circle cx="8.5" cy="21.7" r="1.55" fill="#4d5256"/><circle cx="14.7" cy="3.1" r="1.55" fill="#4d5256"/><circle cx="14.7" cy="9.3" r="1.55" fill="#4d5256"/><circle cx="14.7" cy="15.5" r="1.55" fill="#4d5256"/><circle cx="14.7" cy="21.7" r="1.55" fill="#4d5256"/><circle cx="20.9" cy="3.1" r="1.55" fill="#4d5256"/><circle cx="20.9" cy="9.3" r="1.55" fill="#4d5256"/><circle cx="20.9" cy="15.5" r="1.55" fill="#4d5256"/><circle cx="20.9" cy="21.7" r="1.55" fill="#4d5256"/></svg>
<div class="abs" style="left:2px;top:36.2px;width:30px;height:29px;background:#c6e2f4;border:1px solid #7dc3ec;box-sizing:border-box"></div><svg class="abs" style="left:5px;top:38.7px" width="24" height="24" viewBox="0 0 24 24"><circle cx="2.8" cy="3.1" r="1.55" fill="#4d5256"/><circle cx="2.8" cy="9.3" r="1.55" fill="#4d5256"/><circle cx="2.8" cy="15.5" r="1.55" fill="#4d5256"/><circle cx="9.0" cy="3.1" r="1.55" fill="#4d5256"/><circle cx="9.0" cy="9.3" r="1.55" fill="#4d5256"/><circle cx="15.2" cy="3.1" r="1.55" fill="#4d5256"/><circle cx="9.8" cy="23.0" r="0.95" fill="#4d5256"/><circle cx="13.1" cy="19.7" r="0.95" fill="#4d5256"/><circle cx="13.1" cy="23.0" r="0.95" fill="#4d5256"/><circle cx="16.4" cy="16.4" r="0.95" fill="#4d5256"/><circle cx="16.4" cy="19.7" r="0.95" fill="#4d5256"/><circle cx="16.4" cy="23.0" r="0.95" fill="#4d5256"/><circle cx="19.7" cy="13.1" r="0.95" fill="#4d5256"/><circle cx="19.7" cy="16.4" r="0.95" fill="#4d5256"/><circle cx="19.7" cy="19.7" r="0.95" fill="#4d5256"/><circle cx="19.7" cy="23.0" r="0.95" fill="#4d5256"/><circle cx="23.0" cy="9.8" r="0.95" fill="#4d5256"/><circle cx="23.0" cy="13.1" r="0.95" fill="#4d5256"/><circle cx="23.0" cy="16.4" r="0.95" fill="#4d5256"/><circle cx="23.0" cy="19.7" r="0.95" fill="#4d5256"/><circle cx="23.0" cy="23.0" r="0.95" fill="#4d5256"/><path d="M0.500 23.500L23.500 0.500" stroke="#4d5256" stroke-width="1.400"/></svg>
<div class="abs" style="left:2px;top:68.2px;width:30px;height:29px;background:#c6e2f4;border:1px solid #7dc3ec;box-sizing:border-box"></div><svg class="abs" style="left:5px;top:70.7px" width="24" height="24" viewBox="0 0 24 24"><path d="M3.500 1v20.500H23" fill="none" stroke="#4d5256" stroke-width="1.500"/><path d="M1 5l2.500-4 2.500 4zM19 19l4 2.500-4 2.500z" fill="#4d5256"/><path d="M3.500 21.500L19 4" stroke="#4d5256" stroke-width="1.300"/><circle cx="20" cy="3.500" r="2.300" fill="#c8283c"/><path d="M7.500 21.500a4.500 4.500 0 0 0-1.300-3" fill="none" stroke="#4d5256" stroke-width="1"/><text x="6.500" y="11.500" font-size="11.500" font-family="Liberation Sans" font-weight="bold" fill="#4d5256">r</text><text x="13" y="20" font-size="11" font-family="DejaVu Sans" font-style="italic" font-weight="bold" fill="#4d5256">θ</text></svg>
<svg class="abs" style="left:5px;top:102.7px" width="24" height="24" viewBox="0 0 24 24"><text x="12" y="13" font-size="14" text-anchor="middle" font-family="Liberation Sans" fill="#4d5256" stroke="#4d5256" stroke-width="0.45">in</text><path d="M4 17.300H20" stroke="#4d5256" stroke-width="1.700"/><path d="M1.500 17.300l5-3.200v6.400zM22.500 17.300l-5-3.200v6.400z" fill="#4d5256"/></svg>
<svg class="abs" style="left:5px;top:134.7px" width="24" height="24" viewBox="0 0 24 24"><text x="12" y="13" font-size="14" text-anchor="middle" font-family="Liberation Sans" fill="#4d5256" stroke="#4d5256" stroke-width="0.45">mil</text><path d="M4 17.300H20" stroke="#4d5256" stroke-width="1.700"/><path d="M1.500 17.300l5-3.200v6.400zM22.500 17.300l-5-3.200v6.400z" fill="#4d5256"/></svg>
<div class="abs" style="left:2px;top:164.2px;width:30px;height:29px;background:#c6e2f4;border:1px solid #7dc3ec;box-sizing:border-box"></div><svg class="abs" style="left:5px;top:166.7px" width="24" height="24" viewBox="0 0 24 24"><text x="12" y="13.3" font-size="13.5" text-anchor="middle" font-family="Liberation Sans" fill="#4d5256" stroke="#4d5256" stroke-width="0.45">mm</text><path d="M4 17.300H20" stroke="#4d5256" stroke-width="1.700"/><path d="M1.500 17.300l5-3.200v6.400zM22.500 17.300l-5-3.200v6.400z" fill="#4d5256"/></svg>
<svg class="abs" style="left:5px;top:198.7px" width="24" height="24" viewBox="0 0 24 24"><path d="M12 2.500v17M3.500 11h17" stroke="#c0c2c4" stroke-width="1"/><path d="M12 6.500v9M7.500 11h9" stroke="#1a81c4" stroke-width="2.800"/><path d="M12.800 12l1 11 2.600-2.800 2.400 4.300 2-1-2.400-4.300 3.800-.8z" fill="#4d5256"/></svg>
<div class="abs" style="left:6px;top:231.5px;width:23px;height:1px;background:#babcbe"></div>
<svg class="abs" style="left:5px;top:240.7px" width="24" height="24" viewBox="0 0 24 24"><path d="M5 1v19.500H23" fill="none" stroke="#4d5256" stroke-width="1.800"/><path d="M1 23L21 5" stroke="#4d5256" stroke-width="1.600"/><rect x="5" y="14" width="6.500" height="6.500" fill="none" stroke="#4d5256" stroke-width="1.100"/></svg>
<div class="abs" style="left:6px;top:272.5px;width:23px;height:1px;background:#babcbe"></div>
<div class="abs" style="left:2px;top:278.7px;width:30px;height:29px;background:#c6e2f4;border:1px solid #7dc3ec;box-sizing:border-box"></div><svg class="abs" style="left:5px;top:281.2px" width="24" height="24" viewBox="0 0 24 24"><path d="M4 4L18 19M6 20L19 6M4 4L19 6" stroke="#4d5256" stroke-width="1.300" fill="none"/><circle cx="4" cy="4" r="2.300" fill="#fff" stroke="#4d5256" stroke-width="1.200"/><circle cx="19" cy="6" r="2.300" fill="#fff" stroke="#4d5256" stroke-width="1.200"/><circle cx="6" cy="20" r="2.300" fill="#fff" stroke="#4d5256" stroke-width="1.200"/><circle cx="18" cy="19" r="2.300" fill="#fff" stroke="#4d5256" stroke-width="1.200"/></svg>
<svg class="abs" style="left:5px;top:313.5px" width="24" height="24" viewBox="0 0 24 24"><path d="M1 21L21 1" stroke="#4d5256" stroke-width="1.300"/><path d="M4 13L15 5" stroke="#4d5256" stroke-width="1.200"/><path d="M11 20Q19 18 20 11" fill="none" stroke="#4d5256" stroke-width="1.200"/><circle cx="4" cy="13" r="2" fill="#fff" stroke="#4d5256" stroke-width="1.100"/><circle cx="15" cy="5" r="2" fill="#fff" stroke="#4d5256" stroke-width="1.100"/><circle cx="11" cy="20" r="2" fill="#fff" stroke="#4d5256" stroke-width="1.100"/><circle cx="20" cy="11" r="2" fill="#fff" stroke="#4d5256" stroke-width="1.100"/></svg>
<div class="abs" style="left:6px;top:345.5px;width:23px;height:1px;background:#babcbe"></div>
<svg class="abs" style="left:5px;top:354px" width="24" height="24" viewBox="0 0 24 24"><path d="M1 3h6l6 5.500h10M1 7.500h5l6 5.500h11" fill="none" stroke="#c8283c" stroke-width="1.800"/><path d="M1 16h8l5 4.500h9M1 12h4" fill="none" stroke="#4d5256" stroke-width="1.800"/><path d="M14 12l5 4.500h4" fill="none" stroke="#4d5256" stroke-width="1.800"/><circle cx="9.500" cy="12" r="3" fill="#fff" stroke="#f29100" stroke-width="2.200"/></svg>
<svg class="abs" style="left:5px;top:386.5px" width="24" height="24" viewBox="0 0 24 24"><path d="M7 23V8M12 2h3q5 0 5 5v16M10 6h2q4 0 4 4v13" fill="none" stroke="#b9bbbd" stroke-width="1.800"/><path d="M7 11v12" stroke="#ebaab2" stroke-width="2.200"/><path d="M9 11h14" stroke="#8fc1e2" stroke-width="2.200"/><circle cx="7" cy="10.500" r="2.800" fill="#fff" stroke="#f6c27a" stroke-width="2"/></svg>
<div class="abs" style="left:6px;top:419.0px;width:23px;height:1px;background:#babcbe"></div>
<div class="abs" style="left:2px;top:424.7px;width:30px;height:29px;background:#c6e2f4;border:1px solid #7dc3ec;box-sizing:border-box"></div><svg class="abs" style="left:5px;top:427.2px" width="24" height="24" viewBox="0 0 24 24"><path d="M1 23V11h8.500V2h13.500v21z" fill="#1a81c4"/><path d="M14.500 12.500h8.500" stroke="#c6e2f4" stroke-width="5.600"/><circle cx="14.500" cy="12.500" r="5" fill="#c6e2f4"/><path d="M14.500 12.500h8.500" stroke="#4d5256" stroke-width="1.900"/><circle cx="14.500" cy="12.500" r="2.700" fill="#4d5256"/></svg>
<svg class="abs" style="left:5px;top:459px" width="24" height="24" viewBox="0 0 24 24"><path d="M2 22V11h7v-8.500h13v19.500z" fill="none" stroke="#1a81c4" stroke-width="1.500" stroke-dasharray="3 2.200"/><path d="M15 12h7" stroke="#4d5256" stroke-width="1.600"/><circle cx="15.500" cy="12" r="2.400" fill="#4d5256"/></svg>
<div class="abs" style="left:6px;top:491.5px;width:23px;height:1px;background:#babcbe"></div>
<svg class="abs" style="left:5px;top:500.2px" width="24" height="24" viewBox="0 0 24 24"><path d="M2 3.500h20v6.500a2.500 2.500 0 0 0 0 5V20.500H2z" fill="none" stroke="#4d5256" stroke-width="1.300" transform="translate(24 0) scale(-1 1)"/><rect x="3.8" y="0.500" width="5" height="6" fill="#1a81c4"/><rect x="9.8" y="0.500" width="5" height="6" fill="#1a81c4"/><rect x="15.8" y="0.500" width="5" height="6" fill="#1a81c4"/><rect x="4.3" y="17.500" width="4.200" height="5.500" fill="#eff0f1" stroke="#1a81c4" stroke-width="1.200"/><rect x="10.3" y="17.500" width="4.200" height="5.500" fill="#eff0f1" stroke="#1a81c4" stroke-width="1.200"/><rect x="16.3" y="17.500" width="4.200" height="5.500" fill="#eff0f1" stroke="#1a81c4" stroke-width="1.200"/><path d="M0.500 23L23.500 1.500" stroke="#4d5256" stroke-width="1.400"/></svg>
<svg class="abs" style="left:5px;top:532.2px" width="24" height="24" viewBox="0 0 24 24"><circle cx="12" cy="12.500" r="9.800" fill="#eff0f1" stroke="#c0c2c4" stroke-width="1"/><circle cx="12" cy="12.500" r="4.600" fill="none" stroke="#c0c2c4" stroke-width="1"/><circle cx="12" cy="12.500" r="7.400" fill="none" stroke="#d8d9da" stroke-width="1"/><defs><clipPath id="vc"><path d="M0 0H24L0 22z"/></clipPath></defs><circle cx="12" cy="12.500" r="7.400" fill="none" stroke="#f29100" stroke-width="5.600" clip-path="url(#vc)"/><path d="M0.500 23L23.500 1.500" stroke="#4d5256" stroke-width="1.400"/></svg>
<svg class="abs" style="left:5px;top:564.2px" width="24" height="24" viewBox="0 0 24 24"><path d="M10.500 1v22" stroke="#c8283c" stroke-width="3.400" stroke-linecap="round"/><path d="M2 12h10" stroke="#1a81c4" stroke-width="3.400" stroke-linecap="round"/><path d="M12 10.800h11M12 13.400h11" stroke="#1a81c4" stroke-width="1"/><path d="M9.300 12v11M11.800 12v11" stroke="#fff" stroke-width=".7"/><path d="M1 22L23 2" stroke="#4d5256" stroke-width="1.400"/></svg>
<div class="abs" style="left:6px;top:596.5px;width:23px;height:1px;background:#babcbe"></div>
<div class="abs" style="left:2px;top:602.7px;width:30px;height:29px;background:#c6e2f4;border:1px solid #7dc3ec;box-sizing:border-box"></div><svg class="abs" style="left:5px;top:605.2px" width="24" height="24" viewBox="0 0 24 24"><path d="M12 10.500l9 6.500-9 6.500-9-6.500z" fill="#f29100"/><path d="M12 6.500l9 6.500-9 6.500-9-6.500z" fill="#4d5256"/><path d="M12 1l9.500 7.500-9.500 7.500-9.500-7.500z" fill="#1a81c4"/></svg>
<svg class="abs" style="left:5px;top:637px" width="24" height="24" viewBox="0 0 24 24"><path d="M3 22L16 9" stroke="#4d5256" stroke-width="1.800"/><path d="M14.500 9.500l5.500-7 2.500 2.500-7 5.500z" fill="#4d5256" stroke="#4d5256" stroke-width="2.600" stroke-linejoin="round"/><path d="M2 23l2.200-1" stroke="#4d5256" stroke-width="2.200"/><path d="M8 7.500L20 20" stroke="#1a81c4" stroke-width="3.800" stroke-linecap="round"/><circle cx="6" cy="5.500" r="4.600" fill="#1a81c4"/><path d="M3.500 0l4.200 4.200-3.200 3.200L0 3z" fill="#eff0f1"/><circle cx="20" cy="20" r="2.800" fill="#1a81c4"/><circle cx="20.200" cy="20.200" r="1" fill="#eff0f1"/></svg>
</div>
<div id="right" class="abs" style="left:969px;top:125px;width:35px;height:676px;background:#eff0f1">
<div class="abs" style="left:0;top:0;width:1px;height:676px;background:#b9bbbd"></div>
<svg overflow="visible" class="abs" style="left:6px;top:6.5px" width="24" height="24" viewBox="0 0 24 24"><path d="M7.500 4v15l3.800-3.500 2.500 5.300 2.200-1-2.500-5.300 5-.3z" fill="#4d5256"/></svg>
<svg overflow="visible" class="abs" style="left:6px;top:38.69999999999999px" width="24" height="24" viewBox="0 0 24 24"><path d="M2 3l20 18M2 21L22 3" stroke="#4d5256" stroke-width="1.200"/><circle cx="12" cy="12" r="2.600" fill="#fff" stroke="#4d5256" stroke-width="1.200"/></svg>
<div class="abs" style="left:7px;top:71.0px;width:23px;height:1px;background:#babcbe"></div>
<svg overflow="visible" class="abs" style="left:6px;top:79px" width="24" height="24" viewBox="0 0 24 24"><path d="M2 4.500h20v15H2v-5a2.500 2.500 0 0 0 0-5z" fill="none" stroke="#4d5256" stroke-width="1.300"/><rect x="3.6" y="1" width="4.600" height="6" fill="#1a81c4"/><rect x="3.6" y="17" width="4.600" height="6" fill="#1a81c4"/><rect x="9.7" y="1" width="4.600" height="6" fill="#1a81c4"/><rect x="9.7" y="17" width="4.600" height="6" fill="#1a81c4"/><rect x="15.8" y="1" width="4.600" height="6" fill="#1a81c4"/><rect x="15.8" y="17" width="4.600" height="6" fill="#1a81c4"/></svg>
<svg overflow="visible" class="abs" style="left:6px;top:111.30000000000001px" width="24" height="24" viewBox="0 0 24 24"><path d="M2 21L9 9h7L22 2" fill="none" stroke="#1a81c4" stroke-width="1.800" stroke-linejoin="round"/><path d="M28 20.500v7.200h-7.500z" fill="#232629"/></svg>
<svg overflow="visible" class="abs" style="left:6px;top:143.5px" width="24" height="24" viewBox="0 0 24 24"><path d="M0.500 11.500h1.500a1.500 1.500 0 0 1 1.500 1.500v2a2.200 2.200 0 0 0 4.400 0v-6.500a2.200 2.200 0 0 1 4.400 0v6.500a2.200 2.200 0 0 0 4.400 0v-6.500a2.200 2.200 0 0 1 4.400 0v2a1.500 1.500 0 0 0 1.500 1.500h1" fill="none" stroke="#1a81c4" stroke-width="1.900"/><path d="M28 20.500v7.200h-7.500z" fill="#232629"/></svg>
<svg overflow="visible" class="abs" style="left:6px;top:175.5px" width="24" height="24" viewBox="0 0 24 24"><circle cx="12" cy="12" r="5.700" fill="none" stroke="#f29100" stroke-width="4.200"/></svg>
<div class="abs" style="left:4px;top:205.2px;width:29px;height:29px;background:#c6e2f4;border:1px solid #7dc3ec;box-sizing:border-box"></div><svg overflow="visible" class="abs" style="left:6px;top:207.7px" width="24" height="24" viewBox="0 0 24 24"><path d="M1 23V11h8.500V2h13.500v21z" fill="#1a81c4"/><path d="M14.500 12.500h8.500" stroke="#c6e2f4" stroke-width="5.600"/><circle cx="14.500" cy="12.500" r="5" fill="#c6e2f4"/><path d="M14.500 12.500h8.500" stroke="#4d5256" stroke-width="1.900"/><circle cx="14.500" cy="12.500" r="2.700" fill="#4d5256"/></svg>
<svg overflow="visible" class="abs" style="left:6px;top:239.8px" width="24" height="24" viewBox="0 0 24 24"><defs><pattern id="hp" width="4.200" height="4.200" patternUnits="userSpaceOnUse" patternTransform="rotate(-45)"><rect width="2.100" height="4.200" fill="#4d5256"/></pattern></defs><path d="M2 22V12h7V3h13v19z" fill="url(#hp)" stroke="#4d5256" stroke-width="1"/></svg>
<div class="abs" style="left:7px;top:272.0px;width:23px;height:1px;background:#babcbe"></div>
<svg overflow="visible" class="abs" style="left:6px;top:280.5px" width="24" height="24" viewBox="0 0 24 24"><path d="M2 21L22 3" stroke="#4d5256" stroke-width="1.500"/></svg>
<svg overflow="visible" class="abs" style="left:6px;top:312.5px" width="24" height="24" viewBox="0 0 24 24"><path d="M2.500 21Q3.500 5 21 3" fill="none" stroke="#4d5256" stroke-width="1.500"/></svg>
<svg overflow="visible" class="abs" style="left:6px;top:344.7px" width="24" height="24" viewBox="0 0 24 24"><rect x="3" y="4" width="18.500" height="16" fill="#bfc1c3" stroke="#4d5256" stroke-width="1.500"/></svg>
<svg overflow="visible" class="abs" style="left:6px;top:376.5px" width="24" height="24" viewBox="0 0 24 24"><circle cx="12" cy="12" r="9.300" fill="#bfc1c3" stroke="#4d5256" stroke-width="1.500"/></svg>
<svg overflow="visible" class="abs" style="left:6px;top:408.5px" width="24" height="24" viewBox="0 0 24 24"><path d="M2 3l19.500 3.500-2.500 13L4 21l7-8z" fill="#bfc1c3" stroke="#4d5256" stroke-width="1.500" stroke-linejoin="round"/></svg>
<svg overflow="visible" class="abs" style="left:6px;top:440.29999999999995px" width="24" height="24" viewBox="0 0 24 24"><path d="M5 20Q4 13 12 12Q19 11 19 3" fill="none" stroke="#4d5256" stroke-width="1.500"/><path d="M2 12h20" stroke="#1a81c4" stroke-width="1.300"/><rect x="1" y="10.500" width="3" height="3" fill="#1a81c4"/><rect x="20" y="10.500" width="3" height="3" fill="#1a81c4"/><circle cx="12" cy="12" r="1.800" fill="#fff" stroke="#1a81c4" stroke-width="1"/></svg>
<svg overflow="visible" class="abs" style="left:6px;top:472.70000000000005px" width="24" height="24" viewBox="0 0 24 24"><rect x="1.500" y="2" width="21" height="20" rx="3" fill="#4d5256"/><path d="M3 19l6-7.500 4 4.500 3-3 5 6z" fill="#fff"/><circle cx="16" cy="8" r="2.300" fill="#fff"/></svg>
<svg overflow="visible" class="abs" style="left:6px;top:504.4px" width="24" height="24" viewBox="0 0 24 24"><path d="M3.500 3h17v3.200h-6.800V21h-3.400V6.200H3.500z" fill="#4d5256"/></svg>
<svg overflow="visible" class="abs" style="left:6px;top:536.8px" width="24" height="24" viewBox="0 0 24 24"><rect x="3" y="4" width="18.500" height="16" fill="#bfc1c3" stroke="#4d5256" stroke-width="1.500"/><path d="M6.500 8.500h11.500M6.500 12h8.500M6.500 15.500h11.500" stroke="#4d5256" stroke-width="1.300"/></svg>
<svg overflow="visible" class="abs" style="left:6px;top:568.6px" width="24" height="24" viewBox="0 0 24 24"><rect x="1.500" y="1.500" width="21.500" height="21" fill="#fff" stroke="#4d5256" stroke-width="1.300"/><rect x="2" y="2" width="20.500" height="5" fill="#bfc1c3"/><path d="M1.500 7.200h21.500M1.500 12.400h21.500M1.500 17.600h21.500M8.700 1.500v21M15.900 1.500v21" stroke="#4d5256" stroke-width="1.100"/></svg>
<svg overflow="visible" class="abs" style="left:6px;top:601px" width="24" height="24" viewBox="0 0 24 24"><path d="M3 4.500h18M10 19h9" stroke="#4d5256" stroke-width="1.100"/><path d="M19.500 6.500v10.500" stroke="#4d5256" stroke-width="1"/><path d="M19.500 5l1.800 3.200h-3.600zM19.500 18.500l1.800-3.200h-3.600z" fill="#4d5256"/><circle cx="3" cy="4.500" r="2.700" fill="#1a81c4"/><circle cx="10.500" cy="19" r="2.700" fill="#1a81c4"/><path d="M28 20.500v7.200h-7.500z" fill="#232629"/></svg>
<svg overflow="visible" class="abs" style="left:6px;top:633.5px" width="24" height="24" viewBox="0 0 24 24"><path d="M2.500 1.500v15l3.800-3.500 2.500 5.300 2.200-1-2.500-5.300 5-.3z" fill="#4d5256"/><circle cx="15.500" cy="17" r="6.300" fill="#c8283c"/><path d="M13 14.500l5 5M18 14.500l-5 5" stroke="#fff" stroke-width="1.900"/></svg>
<div class="abs" style="left:7px;top:665.5px;width:23px;height:1px;background:#babcbe"></div>
</div>
<div id="panel" class="abs" style="left:1004px;top:124px;width:204px;height:676px;background:#dddedf;overflow:hidden;font-size:12.6px">
<div class="abs" style="left:5px;top:0;width:199px;height:17px;background:#c1c2c3"><span class="t" style="left:2.5px;top:-2.2px;font-size:11.3px">Apariencia</span></div>
<div class="abs" style="left:54px;top:22.5px;width:115px;height:31.5px;background:#c6c7c9"><span class="t" style="left:8px;top:8.300px;font-size:13.9px">Objetos</span><span class="t" style="left:70px;top:8.300px;font-size:13.4px">Redes</span></div>
<div class="abs" style="left:6px;top:22px;width:48px;height:33px;background:#eff0f1;border-top:3px solid #3daee9;border-radius:3px 3px 0 0;box-sizing:border-box"><span class="t" style="left:7px;top:6px">Capas</span></div><div class="abs" style="left:6px;top:55px;width:198px;height:314.5px;background:#eff0f1;overflow:hidden">
<div class="abs" style="left:15px;top:3px;width:16px;height:14px;background:#c83434"></div><svg class="abs" style="left:37px;top:2.5px" width="16" height="15" viewBox="0 0 16 15"><rect x="0" y="0.500" width="16" height="14" rx="6" fill="#494c4f"/><path d="M2.300 7.500Q8 1.800 13.700 7.500Q8 13.200 2.300 7.500Z" fill="none" stroke="#f4f4f4" stroke-width="1.200"/><circle cx="8" cy="7.500" r="2" fill="#f4f4f4"/></svg><span class="t" style="left:58px;top:1.5px">F.Cu</span>
<div class="abs" style="left:0;top:19.5px;width:198px;height:19px;background:#dfe0e2"></div><svg class="abs" style="left:4px;top:24px" width="6" height="10" viewBox="0 0 6 10"><path d="M0.500 0.500L5.500 5L0.500 9.500Z" fill="#2c2cff"/></svg><div class="abs" style="left:15px;top:22px;width:16px;height:14px;background:#4d7fc4"></div><svg class="abs" style="left:37px;top:21.5px" width="16" height="15" viewBox="0 0 16 15"><rect x="0" y="0.500" width="16" height="14" rx="6" fill="#494c4f"/><path d="M2.300 7.500Q8 1.800 13.700 7.500Q8 13.200 2.300 7.500Z" fill="none" stroke="#f4f4f4" stroke-width="1.200"/><circle cx="8" cy="7.500" r="2" fill="#f4f4f4"/></svg><span class="t" style="left:58px;top:20.5px">B.Cu</span>
<div class="abs" style="left:15px;top:41px;width:16px;height:14px;background:#840084"></div><svg class="abs" style="left:37px;top:40.5px" width="16" height="15" viewBox="0 0 16 15"><rect x="0" y="0.500" width="16" height="14" rx="6" fill="#494c4f"/><path d="M2.300 7.500Q8 1.800 13.700 7.500Q8 13.200 2.300 7.500Z" fill="none" stroke="#f4f4f4" stroke-width="1.200"/><circle cx="8" cy="7.500" r="2" fill="#f4f4f4"/></svg><span class="t" style="left:58px;top:39.5px">F.Adhesive</span>
<div class="abs" style="left:15px;top:60px;width:16px;height:14px;background:#000084"></div><svg class="abs" style="left:37px;top:59.5px" width="16" height="15" viewBox="0 0 16 15"><rect x="0" y="0.500" width="16" height="14" rx="6" fill="#494c4f"/><path d="M2.300 7.500Q8 1.800 13.700 7.500Q8 13.200 2.300 7.500Z" fill="none" stroke="#f4f4f4" stroke-width="1.200"/><circle cx="8" cy="7.500" r="2" fill="#f4f4f4"/></svg><span class="t" style="left:58px;top:58.5px">B.Adhesive</span>
<div class="abs" style="left:15px;top:79px;width:16px;height:14px;background:#a09090"></div><svg class="abs" style="left:37px;top:78.5px" width="16" height="15" viewBox="0 0 16 15"><rect x="0" y="0.500" width="16" height="14" rx="6" fill="#494c4f"/><path d="M2.300 7.500Q8 1.800 13.700 7.500Q8 13.200 2.300 7.500Z" fill="none" stroke="#f4f4f4" stroke-width="1.200"/><circle cx="8" cy="7.500" r="2" fill="#f4f4f4"/></svg><span class="t" style="left:58px;top:77.5px">F.Paste</span>
<div class="abs" style="left:15px;top:98px;width:16px;height:14px;background:#00adad"></div><svg class="abs" style="left:37px;top:97.5px" width="16" height="15" viewBox="0 0 16 15"><rect x="0" y="0.500" width="16" height="14" rx="6" fill="#494c4f"/><path d="M2.300 7.500Q8 1.800 13.700 7.500Q8 13.200 2.300 7.500Z" fill="none" stroke="#f4f4f4" stroke-width="1.200"/><circle cx="8" cy="7.500" r="2" fill="#f4f4f4"/></svg><span class="t" style="left:58px;top:96.5px">B.Paste</span>
<div class="abs" style="left:15px;top:117px;width:16px;height:14px;background:#f2eda1"></div><svg class="abs" style="left:37px;top:116.5px" width="16" height="15" viewBox="0 0 16 15"><rect x="0" y="0.500" width="16" height="14" rx="6" fill="#494c4f"/><path d="M2.300 7.500Q8 1.800 13.700 7.500Q8 13.200 2.300 7.500Z" fill="none" stroke="#f4f4f4" stroke-width="1.200"/><circle cx="8" cy="7.500" r="2" fill="#f4f4f4"/></svg><span class="t" style="left:58px;top:115.5px">F.Silkscreen</span>
<div class="abs" style="left:15px;top:136px;width:16px;height:14px;background:#e8b2a7"></div><svg class="abs" style="left:37px;top:135.5px" width="16" height="15" viewBox="0 0 16 15"><rect x="0" y="0.500" width="16" height="14" rx="6" fill="#494c4f"/><path d="M2.300 7.500Q8 1.800 13.700 7.500Q8 13.200 2.300 7.500Z" fill="none" stroke="#f4f4f4" stroke-width="1.200"/><circle cx="8" cy="7.500" r="2" fill="#f4f4f4"/></svg><span class="t" style="left:58px;top:134.5px">B.Silkscreen</span>
<svg class="abs" style="left:15px;top:155px" width="16" height="14" viewBox="0 0 16 14"><rect width="16" height="14" fill="#5b2a6e"/><path d="M0 0h4v3.500H0zM8 0h4v3.500H8zM4 3.500h4v3.500H4zM12 3.500h4v3.500h-4zM0 7h4v3.500H0zM8 7h4v3.500H8zM4 10.500h4v3.500H4zM12 10.500h4v3.500h-4z" fill="#774689"/></svg><svg class="abs" style="left:37px;top:154.5px" width="16" height="15" viewBox="0 0 16 15"><rect x="0" y="0.500" width="16" height="14" rx="6" fill="#494c4f"/><path d="M2.300 7.500Q8 1.800 13.700 7.500Q8 13.200 2.300 7.500Z" fill="none" stroke="#f4f4f4" stroke-width="1.200"/><circle cx="8" cy="7.500" r="2" fill="#f4f4f4"/></svg><span class="t" style="left:58px;top:153.5px">F.Mask</span>
<svg class="abs" style="left:15px;top:174px" width="16" height="14" viewBox="0 0 16 14"><rect width="16" height="14" fill="#0a5c50"/><path d="M0 0h4v3.500H0zM8 0h4v3.500H8zM4 3.500h4v3.500H4zM12 3.500h4v3.500h-4zM0 7h4v3.500H0zM8 7h4v3.500H8zM4 10.500h4v3.500H4zM12 10.500h4v3.500h-4z" fill="#2a8070"/></svg><svg class="abs" style="left:37px;top:173.5px" width="16" height="15" viewBox="0 0 16 15"><rect x="0" y="0.500" width="16" height="14" rx="6" fill="#494c4f"/><path d="M2.300 7.500Q8 1.800 13.700 7.500Q8 13.200 2.300 7.500Z" fill="none" stroke="#f4f4f4" stroke-width="1.200"/><circle cx="8" cy="7.500" r="2" fill="#f4f4f4"/></svg><span class="t" style="left:58px;top:172.5px">B.Mask</span>
<div class="abs" style="left:15px;top:193px;width:16px;height:14px;background:#c2c2c2"></div><svg class="abs" style="left:37px;top:192.5px" width="16" height="15" viewBox="0 0 16 15"><rect x="0" y="0.500" width="16" height="14" rx="6" fill="#494c4f"/><path d="M2.300 7.500Q8 1.800 13.700 7.500Q8 13.200 2.300 7.500Z" fill="none" stroke="#f4f4f4" stroke-width="1.200"/><circle cx="8" cy="7.500" r="2" fill="#f4f4f4"/></svg><span class="t" style="left:58px;top:191.5px">User.Drawings</span>
<div class="abs" style="left:15px;top:212px;width:16px;height:14px;background:#5994dc"></div><svg class="abs" style="left:37px;top:211.5px" width="16" height="15" viewBox="0 0 16 15"><rect x="0" y="0.500" width="16" height="14" rx="6" fill="#494c4f"/><path d="M2.300 7.500Q8 1.800 13.700 7.500Q8 13.200 2.300 7.500Z" fill="none" stroke="#f4f4f4" stroke-width="1.200"/><circle cx="8" cy="7.500" r="2" fill="#f4f4f4"/></svg><span class="t" style="left:58px;top:210.5px">User.Comments</span>
<div class="abs" style="left:15px;top:231px;width:16px;height:14px;background:#b4dbd2"></div><svg class="abs" style="left:37px;top:230.5px" width="16" height="15" viewBox="0 0 16 15"><rect x="0" y="0.500" width="16" height="14" rx="6" fill="#494c4f"/><path d="M2.300 7.500Q8 1.800 13.700 7.500Q8 13.200 2.300 7.500Z" fill="none" stroke="#f4f4f4" stroke-width="1.200"/><circle cx="8" cy="7.500" r="2" fill="#f4f4f4"/></svg><span class="t" style="left:58px;top:229.5px">User.Eco1</span>
<div class="abs" style="left:15px;top:250px;width:16px;height:14px;background:#d8c852"></div><svg class="abs" style="left:37px;top:249.5px" width="16" height="15" viewBox="0 0 16 15"><rect x="0" y="0.500" width="16" height="14" rx="6" fill="#494c4f"/><path d="M2.300 7.500Q8 1.800 13.700 7.500Q8 13.200 2.300 7.500Z" fill="none" stroke="#f4f4f4" stroke-width="1.200"/><circle cx="8" cy="7.500" r="2" fill="#f4f4f4"/></svg><span class="t" style="left:58px;top:248.5px">User.Eco2</span>
<div class="abs" style="left:15px;top:269px;width:16px;height:14px;background:#d0d2cd"></div><svg class="abs" style="left:37px;top:268.5px" width="16" height="15" viewBox="0 0 16 15"><rect x="0" y="0.500" width="16" height="14" rx="6" fill="#494c4f"/><path d="M2.300 7.500Q8 1.800 13.700 7.500Q8 13.200 2.300 7.500Z" fill="none" stroke="#f4f4f4" stroke-width="1.200"/><circle cx="8" cy="7.500" r="2" fill="#f4f4f4"/></svg><span class="t" style="left:58px;top:267.5px">Edge.Cuts</span>
<div class="abs" style="left:15px;top:288px;width:16px;height:14px;background:#ff26e2"></div><svg class="abs" style="left:37px;top:287.5px" width="16" height="15" viewBox="0 0 16 15"><rect x="0" y="0.500" width="16" height="14" rx="6" fill="#494c4f"/><path d="M2.300 7.500Q8 1.800 13.700 7.500Q8 13.200 2.300 7.500Z" fill="none" stroke="#f4f4f4" stroke-width="1.200"/><circle cx="8" cy="7.500" r="2" fill="#f4f4f4"/></svg><span class="t" style="left:58px;top:286.5px">Margin</span>
<div class="abs" style="left:15px;top:307px;width:16px;height:14px;background:#ff26e2"></div><svg class="abs" style="left:37px;top:306.5px" width="16" height="15" viewBox="0 0 16 15"><rect x="0" y="0.500" width="16" height="14" rx="6" fill="#494c4f"/><path d="M2.300 7.500Q8 1.800 13.700 7.500Q8 13.200 2.300 7.500Z" fill="none" stroke="#f4f4f4" stroke-width="1.200"/><circle cx="8" cy="7.500" r="2" fill="#f4f4f4"/></svg><span class="t" style="left:58px;top:305.5px">F.Courtyard</span>
</div>
<div class="abs" style="left:6px;top:369px;width:200px;height:24.5px;background:#eff0f1;border:1px solid #c6c7c9;box-sizing:border-box"><svg class="abs" style="left:11px;top:7px" width="6" height="10" viewBox="0 0 6 10"><path d="M0.500 0.500L5.500 5L0.500 9.500Z" fill="#232629"/></svg><span class="t" style="left:19px;top:4px;letter-spacing:-0.15px">Opciones de visualización de capas</span></div>
<span class="t" style="left:12px;top:405px">Preconfiguraciones (Ctrl+Tab):</span><div class="combo" style="left:12px;top:424px;width:230px;height:32px"><span class="t" style="left:9px;top:6.500px">---</span></div>
<span class="t" style="left:12px;top:461px">Vistas (Shift+Tab):</span><div class="combo" style="left:12px;top:480px;width:230px;height:32px"><span class="t" style="left:9px;top:6.500px">---</span></div>
<div class="abs" style="left:5px;top:523.5px;width:199px;height:17.5px;background:#c1c2c3"><span class="t" style="left:3px;top:-1px;font-size:11.3px">Filtro de selección</span></div>
<svg class="abs" style="left:14px;top:548.5px" width="16" height="16" viewBox="0 0 16 16"><rect x="0.500" y="0.500" width="15" height="15" rx="3" fill="#d3e6f3" stroke="#8fc5e6"/><path d="M3.800 8.200l2.900 2.900 5.500-5.800" fill="none" stroke="#232629" stroke-width="1.700"/></svg><span class="t" style="left:34px;top:548.0px">Todos los elementos</span><svg class="abs" style="left:161px;top:548.5px" width="16" height="16" viewBox="0 0 16 16"><rect x="0.500" y="0.500" width="15" height="15" rx="3" fill="#f6f6f7" stroke="#b7b9bb"/></svg><span class="t" style="left:181px;top:548.0px">Elementos bloqueados</span>
<svg class="abs" style="left:14px;top:569.5px" width="16" height="16" viewBox="0 0 16 16"><rect x="0.500" y="0.500" width="15" height="15" rx="3" fill="#d3e6f3" stroke="#8fc5e6"/><path d="M3.800 8.200l2.900 2.900 5.500-5.800" fill="none" stroke="#232629" stroke-width="1.700"/></svg><span class="t" style="left:34px;top:569.0px">Huellas</span><svg class="abs" style="left:161px;top:569.5px" width="16" height="16" viewBox="0 0 16 16"><rect x="0.500" y="0.500" width="15" height="15" rx="3" fill="#d3e6f3" stroke="#8fc5e6"/><path d="M3.800 8.200l2.900 2.900 5.500-5.800" fill="none" stroke="#232629" stroke-width="1.700"/></svg><span class="t" style="left:181px;top:569.0px">Texto</span>
<svg class="abs" style="left:14px;top:590.5px" width="16" height="16" viewBox="0 0 16 16"><rect x="0.500" y="0.500" width="15" height="15" rx="3" fill="#d3e6f3" stroke="#8fc5e6"/><path d="M3.800 8.200l2.900 2.900 5.500-5.800" fill="none" stroke="#232629" stroke-width="1.700"/></svg><span class="t" style="left:34px;top:590.0px">Pistas</span><svg class="abs" style="left:161px;top:590.5px" width="16" height="16" viewBox="0 0 16 16"><rect x="0.500" y="0.500" width="15" height="15" rx="3" fill="#d3e6f3" stroke="#8fc5e6"/><path d="M3.800 8.200l2.900 2.900 5.500-5.800" fill="none" stroke="#232629" stroke-width="1.700"/></svg><span class="t" style="left:181px;top:590.0px">Vías</span>
<svg class="abs" style="left:14px;top:611.5px" width="16" height="16" viewBox="0 0 16 16"><rect x="0.500" y="0.500" width="15" height="15" rx="3" fill="#d3e6f3" stroke="#8fc5e6"/><path d="M3.800 8.200l2.900 2.900 5.500-5.800" fill="none" stroke="#232629" stroke-width="1.700"/></svg><span class="t" style="left:34px;top:611.0px">Pads</span><svg class="abs" style="left:161px;top:611.5px" width="16" height="16" viewBox="0 0 16 16"><rect x="0.500" y="0.500" width="15" height="15" rx="3" fill="#d3e6f3" stroke="#8fc5e6"/><path d="M3.800 8.200l2.900 2.900 5.500-5.800" fill="none" stroke="#232629" stroke-width="1.700"/></svg><span class="t" style="left:181px;top:611.0px">Gráficos</span>
<svg class="abs" style="left:14px;top:632.5px" width="16" height="16" viewBox="0 0 16 16"><rect x="0.500" y="0.500" width="15" height="15" rx="3" fill="#d3e6f3" stroke="#8fc5e6"/><path d="M3.800 8.200l2.900 2.900 5.500-5.800" fill="none" stroke="#232629" stroke-width="1.700"/></svg><span class="t" style="left:34px;top:632.0px">Zonas</span><svg class="abs" style="left:161px;top:632.5px" width="16" height="16" viewBox="0 0 16 16"><rect x="0.500" y="0.500" width="15" height="15" rx="3" fill="#d3e6f3" stroke="#8fc5e6"/><path d="M3.800 8.200l2.900 2.900 5.500-5.800" fill="none" stroke="#232629" stroke-width="1.700"/></svg><span class="t" style="left:181px;top:632.0px">Áreas de reglas</span>
<svg class="abs" style="left:14px;top:653.5px" width="16" height="16" viewBox="0 0 16 16"><rect x="0.500" y="0.500" width="15" height="15" rx="3" fill="#d3e6f3" stroke="#8fc5e6"/><path d="M3.800 8.200l2.900 2.900 5.500-5.800" fill="none" stroke="#232629" stroke-width="1.700"/></svg><span class="t" style="left:34px;top:653.0px">Cotas</span><svg class="abs" style="left:161px;top:653.5px" width="16" height="16" viewBox="0 0 16 16"><rect x="0.500" y="0.500" width="15" height="15" rx="3" fill="#d3e6f3" stroke="#8fc5e6"/><path d="M3.800 8.200l2.900 2.900 5.500-5.800" fill="none" stroke="#232629" stroke-width="1.700"/></svg><span class="t" style="left:181px;top:653.0px">Otros elementos</span>
</div>
<div id="status" class="abs" style="left:0;top:800px;width:1208px;height:29px;background:#eff0f1">
<span class="t" style="left:12px;top:3px">Tipo</span><span class="t" style="left:12px;top:22px">Zona de cobre</span>
<span class="t" style="left:130px;top:3px">Red</span>
<span class="t" style="left:184px;top:3px">Clase de red resuelta</span><span class="t" style="left:184px;top:22px">Default</span>
<span class="t" style="left:342px;top:3px">Prioridad</span><span class="t" style="left:342px;top:22px">1</span>
<span class="t" style="left:429px;top:3px">Capas</span><span class="t" style="left:429px;top:22px">B.Cu</span>
<span class="t" style="left:495px;top:3px">Modo relleno</span><span class="t" style="left:495px;top:22px">Sólido</span>
<span class="t" style="left:607px;top:3px">Área rellena</span><span class="t" style="left:607px;top:22px">0,0000 mm²</span>
<span class="t" style="left:711px;top:3px">Margen mínimo: 0,5000 mm</span><span class="t" style="left:711px;top:22px">(desde zona)</span>
<span class="t" style="left:916px;top:3px">Número de esquinas</span><span class="t" style="left:916px;top:22px">8</span>
</div>
<div id="menu" class="abs">
<span class="mi" style="top:9px">Deshacer Draw Zone</span>
<span class="mi dis" style="top:38px">Rehacer</span>
<span class="mi" style="top:72px">Cortar</span><span class="sc" style="top:72px">Ctrl+X</span>
<span class="mi" style="top:101px">Copiar</span><span class="sc" style="top:101px">Ctrl+C</span>
<span class="mi dis" style="top:130px">Pegar</span><span class="sc scd" style="top:130px">Ctrl+V</span>
<span class="mi dis" style="top:159px">Pegado especial...</span><span class="sc scd" style="top:159px">Mayús+Ctrl+V</span>
<span class="mi" style="top:188px">Eliminar</span><span class="sc" style="top:188px">Supr</span>
<span class="mi" style="top:220px">Seleccionar todo</span><span class="sc" style="top:220px">Ctrl+A</span>
<span class="mi" style="top:245px">Eliminar selección</span><span class="sc" style="top:245px">Mayús+Ctrl+A</span>
<span class="mi" style="top:277px">Buscar</span><span class="sc" style="top:277px">Ctrl+F</span>
<span class="mi" style="top:311px">Editar propiedades de pistas y vías...</span>
<span class="mi" style="top:340px">Editar propiedades de texto y gráficos...</span>
<span class="mi" style="top:369px">Editar lágrimas...</span>
<span class="mi" style="top:398px">Cambiar huellas...</span>
<span class="mi" style="top:427px">Permutar capas...</span>
<span class="mi" style="top:456px">Origen de cuadrícula...</span>
<span class="mi" style="top:490px">Rellenar todas las zonas</span><span class="sc" style="top:490px">B</span>
<span class="mi" style="top:519px">Vaciar todas las zonas</span><span class="sc" style="top:519px">Ctrl+B</span>
<span class="mi" style="top:548px">Actualizar todos los patrones de afinado</span>
<span class="mi" style="top:582px">Herramienta de eliminación interactiva</span>
<span class="mi" style="top:611px">Eliminaciones globales...</span>
<div class="ms" style="top:62px"></div>
<div class="ms" style="top:212px"></div>
<div class="ms" style="top:267px"></div>
<div class="ms" style="top:301px"></div>
<div class="ms" style="top:480px"></div>
<div class="ms" style="top:572px"></div>
<!--MENUICONS-->
<svg style="left:11px;top:4.5px" width="24" height="24" viewBox="0 0 24 24"><path d="M4.800 7.800A8.300 8.300 0 1 1 4.300 15.800" fill="none" stroke="#4d5256" stroke-width="1.900"/><path d="M2.500 1.500v6.800H9.300" fill="none" stroke="#4d5256" stroke-width="1.900"/></svg>
<svg style="left:11px;top:33.5px" width="24" height="24" viewBox="0 0 24 24"><path d="M19.200 7.800A8.300 8.300 0 1 0 19.700 15.800" fill="none" stroke="#4d5256" stroke-width="1.900"/><path d="M21.500 1.500v6.800H14.700" fill="none" stroke="#4d5256" stroke-width="1.900"/></svg>
<svg style="left:11px;top:67.5px" width="24" height="24" viewBox="0 0 24 24"><path d="M0.500 5.500L16.500 14.500M0.500 18L16.500 9" stroke="#4d5256" stroke-width="1.800"/><circle cx="19" cy="5.500" r="3.200" fill="none" stroke="#4d5256" stroke-width="1.800"/><circle cx="19" cy="18" r="3.200" fill="none" stroke="#4d5256" stroke-width="1.800"/></svg>
<svg style="left:11px;top:96.5px" width="24" height="24" viewBox="0 0 24 24"><path d="M1.500 1.500h10l3.500 3.500v15h-13.500z" fill="#f3f4f5" stroke="#4d5256" stroke-width="1.500"/><path d="M7 4.500h10l4.500 4.500v14h-14.500z" fill="#f3f4f5" stroke="#4d5256" stroke-width="1.500"/><path d="M17 4.500v4.500h4.500" fill="none" stroke="#4d5256" stroke-width="1.300"/><path d="M10.500 13h7M10.500 16.500h5" stroke="#4d5256" stroke-width="1.300"/></svg>
<svg style="left:11px;top:125.5px" width="24" height="24" viewBox="0 0 24 24"><path d="M4 5h4.500v-1.500a3.500 2 0 0 1 7 0v1.500H20v16.500H4z" fill="#a8aaac" stroke="#8f9193" stroke-width="1.300"/><path d="M9 3.500h6" stroke="#8f9193" stroke-width="1.300"/><rect x="10" y="8.500" width="12" height="14" fill="#eeeff0" stroke="#8f9193" stroke-width="1.300"/></svg>
<svg style="left:11px;top:154.5px" width="24" height="24" viewBox="0 0 24 24"><path d="M1 4h4v-1.500a3 1.800 0 0 1 6 0v1.500h4v15h-14z" fill="#a8aaac" stroke="#8f9193" stroke-width="1.300"/><path d="M5.500 2.500h5" stroke="#8f9193" stroke-width="1.300"/><rect x="6.500" y="7" width="11" height="12" fill="#eeeff0" stroke="#8f9193" stroke-width="1.300"/><rect x="1.500" y="13.500" width="22.500" height="9.500" fill="#2a7fc0"/><text x="12.800" y="22" font-family="Liberation Sans" font-size="10.300" fill="#fff" text-anchor="middle">R42</text></svg>
<svg style="left:11px;top:183.5px" width="24" height="24" viewBox="0 0 24 24"><path d="M2.500 5h19M8.500 4.500V2.500h7v2" fill="none" stroke="#4d5256" stroke-width="1.900"/><path d="M4.500 5.500l1 15q.2 2 2 2h9q1.800 0 2-2l1-15" fill="none" stroke="#4d5256" stroke-width="1.900"/><path d="M9 9v10M12 9v10M15 9v10" stroke="#4d5256" stroke-width="1.700"/></svg>
<svg style="left:11px;top:272.5px" width="24" height="24" viewBox="0 0 24 24"><circle cx="13.500" cy="9.500" r="7.800" fill="none" stroke="#4d5256" stroke-width="1.800"/><path d="M8 15.500L1.500 22.500" stroke="#4d5256" stroke-width="2"/><text x="13.500" y="13.500" font-family="Liberation Sans" font-weight="bold" font-size="11" fill="#4d5256" text-anchor="middle">A</text></svg>
<svg style="left:11px;top:306.5px" width="24" height="24" viewBox="0 0 24 24"><path d="M1.500 23L6.500 11.500h8.500L21.500 1.500" fill="none" stroke="#1a81c4" stroke-width="2.100"/><path d="M5.500 2l5.500 5.500M22.500 14.500l-5.500-5" stroke="#4d5256" stroke-width="1.300"/><path d="M13 9.500l-5.500-1.200 4.300-4.300zM15 7.500l5.300 1-4 4.200z" fill="#4d5256"/><circle cx="12" cy="19.800" r="3.600" fill="#f29100"/><circle cx="12" cy="19.800" r="1.600" fill="#c4c6c8"/></svg>
<svg style="left:11px;top:335.5px" width="24" height="24" viewBox="0 0 24 24"><path d="M3 2h18v3.700h-7V22.500h-4V5.700H3z" fill="#4d5256"/></svg>
<svg style="left:11px;top:364.5px" width="24" height="24" viewBox="0 0 24 24"><path d="M13.500 10.500L23 1.500" stroke="#1a81c4" stroke-width="3.400" stroke-linecap="round"/><path d="M1.500 22.500l9-9" stroke="#c8283c" stroke-width="3.400" stroke-linecap="round"/><circle cx="12" cy="12" r="4.800" fill="#b4b6b8" stroke="#f29100" stroke-width="3.600"/></svg>
<svg style="left:11px;top:393.5px" width="24" height="24" viewBox="0 0 24 24"><path d="M1 6.500h4.500q2.500 0 4.500 3l3 5q2 3 4.500 3h2M1 17.500h4.500q2.500 0 4-2.500M13 9q2-2.500 5-2.500h2" fill="none" stroke="#4d5256" stroke-width="1.900"/><path d="M18.500 2.500l4.500 4-4.500 4zM18.500 13.500l4.500 4-4.500 4z" fill="#4d5256"/></svg>
<svg style="left:11px;top:422.5px" width="24" height="24" viewBox="0 0 24 24"><path d="M12 1l11 11-11 11L1 12z" fill="#d3d4d6"/><ellipse cx="12" cy="11.500" rx="11" ry="6.300" fill="#f3f4f5" stroke="#4d5256" stroke-width="1.300"/><path d="M7 9.500l5 4.500 5-4.500" fill="none" stroke="#1a81c4" stroke-width="2.500"/></svg>
<svg style="left:11px;top:451.5px" width="24" height="24" viewBox="0 0 24 24"><circle cx="2.5" cy="2.5" r="1.400" fill="#4d5256"/><circle cx="2.5" cy="8.8" r="1.400" fill="#4d5256"/><circle cx="2.5" cy="15.1" r="1.400" fill="#4d5256"/><circle cx="2.5" cy="21.4" r="1.400" fill="#4d5256"/><circle cx="8.8" cy="2.5" r="1.400" fill="#4d5256"/><circle cx="8.8" cy="8.8" r="1.400" fill="#4d5256"/><circle cx="8.8" cy="15.1" r="1.400" fill="#4d5256"/><circle cx="8.8" cy="21.4" r="1.400" fill="#4d5256"/><circle cx="15.1" cy="2.5" r="1.400" fill="#4d5256"/><circle cx="15.1" cy="8.8" r="1.400" fill="#4d5256"/><circle cx="15.1" cy="15.1" r="1.400" fill="#4d5256"/><circle cx="15.1" cy="21.4" r="1.400" fill="#4d5256"/><circle cx="21.4" cy="2.5" r="1.400" fill="#4d5256"/><circle cx="21.4" cy="8.8" r="1.400" fill="#4d5256"/><circle cx="21.4" cy="15.1" r="1.400" fill="#4d5256"/><circle cx="21.4" cy="21.4" r="1.400" fill="#4d5256"/><path d="M8.800 5v18M0.500 15.100h17" stroke="#1a81c4" stroke-width="1.800"/></svg>
<svg style="left:11px;top:485.5px" width="24" height="24" viewBox="0 0 24 24"><path d="M15 5Q21.500 6.500 22.300 12.500Q24.300 16 22.300 18.200Q19.500 19.300 18.300 16.500Q17.800 13.500 19.300 11.500Q18.500 8 15 5Z" fill="#1a81c4"/><path d="M9 3L17.500 9.800L10.500 20L1.500 12.500Z" fill="#3a3d40" stroke="#3a3d40" stroke-width="1.800" stroke-linejoin="round"/><path d="M2.500 1l9 8.500" stroke="#4d5256" stroke-width="1.200" fill="none"/><circle cx="11.800" cy="9.800" r="1.900" fill="#3a3d40" stroke="#f3f4f5" stroke-width="1"/></svg>
<svg style="left:11px;top:514.5px" width="24" height="24" viewBox="0 0 24 24"><path d="M15 5Q21.500 6.500 22.300 12.500Q24.300 16 22.300 18.200Q19.500 19.300 18.300 16.500Q17.800 13.500 19.300 11.500Q18.500 8 15 5Z" fill="#b4b6b8"/><path d="M9 3L17.500 9.800L10.500 20L1.500 12.500Z" fill="#62656a" stroke="#62656a" stroke-width="1.800" stroke-linejoin="round"/><path d="M2.500 1l9 8.500" stroke="#4d5256" stroke-width="1.200" fill="none"/><circle cx="11.800" cy="9.800" r="1.900" fill="#62656a" stroke="#f3f4f5" stroke-width="1"/><path d="M0.800 22.800L23 2" stroke="#c8283c" stroke-width="2.200"/></svg>
<svg style="left:11px;top:543.5px" width="24" height="24" viewBox="0 0 24 24"><path d="M1.500 15V6.500M1.500 13.500h3a2 2 0 0 0 2-2V4a2.400 2.400 0 0 1 4.800 0v7.500a2.400 2.400 0 0 0 4.800 0V4a2.400 2.400 0 0 1 4.800 0v9.500" fill="none" stroke="#1a81c4" stroke-width="1.900"/><path d="M1.500 16v7.500M22.500 14.500v9M2 21h20" stroke="#4d5256" stroke-width="1"/><path d="M1.800 21l3.500-1.800v3.600zM22.200 21l-3.500-1.800v3.600z" fill="#4d5256"/></svg>
<svg style="left:11px;top:577.5px" width="24" height="24" viewBox="0 0 24 24"><path d="M3 0.500v16l4-3.800 2.700 5.700 2.300-1.100-2.700-5.600 5.400-.3z" fill="#4d5256"/><circle cx="17" cy="17.500" r="6.800" fill="#c8283c"/><path d="M14.300 14.800l5.400 5.400M19.700 14.800l-5.400 5.400" stroke="#fff" stroke-width="2.200"/></svg>
<svg style="left:11px;top:606.5px" width="24" height="24" viewBox="0 0 24 24"><path d="M3 23.500v-8q0-3 3-3M8 23.500v-7M12.500 23.500v-4" fill="none" stroke="#c2c4c6" stroke-width="1.800"/><path d="M3 4.500l5 4M17 16.500l6.500 7" stroke="#1a81c4" stroke-width="2.200"/><circle cx="3.500" cy="3.300" r="2.100" fill="#fff" stroke="#f29100" stroke-width="1.400"/><circle cx="12.500" cy="12" r="6.900" fill="#c8283c"/><path d="M9.800 9.300l5.400 5.400M15.200 9.300l-5.400 5.400" stroke="#fff" stroke-width="2.200"/></svg>
</div>
<svg class="abs" style="left:0;top:0" width="1208" height="829" viewBox="0 0 1208 829">
<path d="M320.500 95.600L150 54.200" stroke="#ff0000" stroke-width="5.600"/><path d="M121.500 47.900L152.700 43.500L146.700 63.400Z" fill="#ff0000"/>
<path d="M442.600 506.500L292 542.500" stroke="#ff0000" stroke-width="5.600"/><path d="M264.800 550.300L290.300 533.500L295.500 554Z" fill="#ff0000"/>
</svg>
</body></html>
